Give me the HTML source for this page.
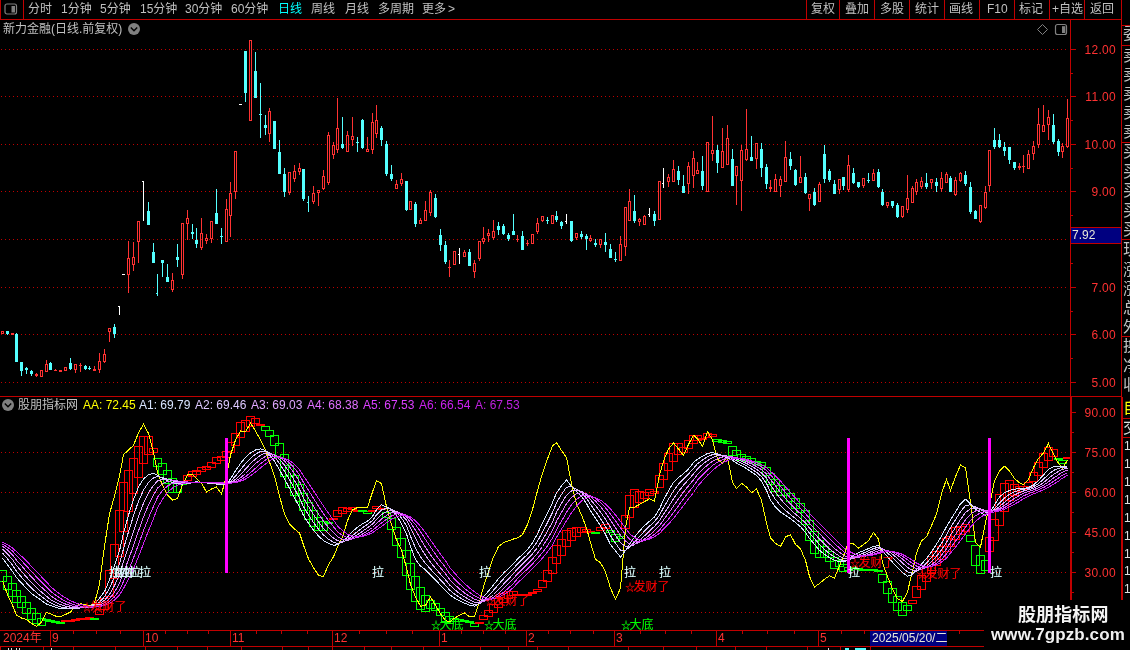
<!DOCTYPE html><html><head><meta charset="utf-8"><title>chart</title><style>
html,body{margin:0;padding:0;background:#000;}
.a,.t,.pl,.lab,.mo,.rp{will-change:transform;}
body{width:1130px;height:650px;position:relative;overflow:hidden;font-family:"Liberation Sans","Noto Sans CJK SC",sans-serif;font-size:12px;color:#c0c0c0;}
.a{position:absolute;white-space:nowrap;line-height:14px;}
.hl{position:absolute;height:1px;background:#c00000;}
.vl{position:absolute;width:1px;background:#c00000;}
.t{position:absolute;white-space:nowrap;top:2px;line-height:15px;font-size:12px;color:#c0c0c0;}
.pl{position:absolute;left:1076px;width:40px;text-align:right;color:#ff3232;line-height:14px;font-size:12px;letter-spacing:0.3px;}
.lab{position:absolute;white-space:nowrap;font-size:12px;line-height:12px;-webkit-text-stroke:0.12px;}
.mo{position:absolute;top:631px;color:#ff3232;line-height:14px;font-size:12px;}
.rp{position:absolute;left:1123px;width:7px;overflow:hidden;white-space:nowrap;font-size:16px;line-height:16px;color:#c0c0c0;}
</style></head><body>
<svg width="1130" height="650" viewBox="0 0 1130 650" style="position:absolute;left:0;top:0" shape-rendering="crispEdges">
<line x1="1" y1="49.5" x2="1067" y2="49.5" stroke="#c00000" stroke-width="1" stroke-dasharray="1 3"/>
<line x1="1" y1="96.5" x2="1067" y2="96.5" stroke="#c00000" stroke-width="1" stroke-dasharray="1 3"/>
<line x1="1" y1="144.5" x2="1067" y2="144.5" stroke="#c00000" stroke-width="1" stroke-dasharray="1 3"/>
<line x1="1" y1="191.5" x2="1067" y2="191.5" stroke="#c00000" stroke-width="1" stroke-dasharray="1 3"/>
<line x1="1" y1="239.5" x2="1067" y2="239.5" stroke="#c00000" stroke-width="1" stroke-dasharray="1 3"/>
<line x1="1" y1="287.5" x2="1067" y2="287.5" stroke="#c00000" stroke-width="1" stroke-dasharray="1 3"/>
<line x1="1" y1="334.5" x2="1067" y2="334.5" stroke="#c00000" stroke-width="1" stroke-dasharray="1 3"/>
<line x1="1" y1="382.5" x2="1067" y2="382.5" stroke="#c00000" stroke-width="1" stroke-dasharray="1 3"/>
<line x1="1" y1="452.5" x2="1067" y2="452.5" stroke="#c00000" stroke-width="1" stroke-dasharray="1 3"/>
<line x1="1" y1="492.5" x2="1067" y2="492.5" stroke="#c00000" stroke-width="1" stroke-dasharray="1 3"/>
<line x1="1" y1="532.5" x2="1067" y2="532.5" stroke="#c00000" stroke-width="1" stroke-dasharray="1 3"/>
<line x1="1" y1="572.5" x2="1067" y2="572.5" stroke="#c00000" stroke-width="1" stroke-dasharray="1 3"/>
<line x1="1" y1="612.5" x2="1067" y2="612.5" stroke="#c00000" stroke-width="1" stroke-dasharray="1 3"/>
<g><rect x="1.5" y="331.5" width="2" height="2" fill="none" stroke="#ff3232" stroke-width="1"/><rect x="7" y="331" width="1" height="4" fill="#54ffff"/><rect x="6" y="331" width="3" height="3" fill="#54ffff"/><rect x="11" y="333" width="3" height="2" fill="#ff3232"/><rect x="16" y="333" width="1" height="29" fill="#54ffff"/><rect x="15" y="334" width="3" height="28" fill="#54ffff"/><rect x="21" y="362" width="1" height="14" fill="#54ffff"/><rect x="20" y="362" width="3" height="9" fill="#54ffff"/><rect x="26" y="367" width="1" height="7" fill="#54ffff"/><rect x="25" y="368" width="3" height="2" fill="#54ffff"/><rect x="31" y="370" width="1" height="6" fill="#54ffff"/><rect x="30" y="371" width="3" height="3" fill="#54ffff"/><rect x="36" y="373" width="1" height="1" fill="#ff3232"/><rect x="36" y="376" width="1" height="1" fill="#ff3232"/><rect x="35" y="374" width="3" height="2" fill="#ff3232"/><rect x="40.5" y="370.5" width="2" height="6" fill="none" stroke="#ff3232" stroke-width="1"/><rect x="46" y="360" width="1" height="4" fill="#ff3232"/><rect x="45.5" y="364.5" width="2" height="7" fill="none" stroke="#ff3232" stroke-width="1"/><rect x="50" y="362" width="1" height="8" fill="#54ffff"/><rect x="49" y="363" width="3" height="7" fill="#54ffff"/><rect x="55" y="369" width="1" height="1" fill="#ff3232"/><rect x="54" y="370" width="3" height="1" fill="#ff3232"/><rect x="59" y="370" width="3" height="2" fill="#ff3232"/><rect x="64.5" y="367.5" width="2" height="3" fill="none" stroke="#ff3232" stroke-width="1"/><rect x="70" y="358" width="1" height="12" fill="#54ffff"/><rect x="69" y="363" width="3" height="6" fill="#54ffff"/><rect x="75" y="370" width="1" height="3" fill="#ff3232"/><rect x="74.5" y="364.5" width="2" height="5" fill="none" stroke="#ff3232" stroke-width="1"/><rect x="80" y="363" width="1" height="2" fill="#ff3232"/><rect x="80" y="366" width="1" height="6" fill="#ff3232"/><rect x="79" y="365" width="3" height="1" fill="#ff3232"/><rect x="85" y="365" width="1" height="5" fill="#54ffff"/><rect x="84" y="366" width="3" height="3" fill="#54ffff"/><rect x="89" y="366" width="1" height="4" fill="#54ffff"/><rect x="88" y="368" width="3" height="1" fill="#54ffff"/><rect x="94" y="366" width="1" height="3" fill="#ff3232"/><rect x="93" y="369" width="3" height="2" fill="#ff3232"/><rect x="99" y="353" width="1" height="8" fill="#ff3232"/><rect x="99" y="370" width="1" height="3" fill="#ff3232"/><rect x="98.5" y="361.5" width="2" height="8" fill="none" stroke="#ff3232" stroke-width="1"/><rect x="104" y="349" width="1" height="5" fill="#ff3232"/><rect x="104" y="362" width="1" height="1" fill="#ff3232"/><rect x="103.5" y="354.5" width="2" height="7" fill="none" stroke="#ff3232" stroke-width="1"/><rect x="109" y="332" width="1" height="10" fill="#ff3232"/><rect x="108.5" y="328.5" width="2" height="3" fill="none" stroke="#ff3232" stroke-width="1"/><rect x="114" y="324" width="1" height="14" fill="#54ffff"/><rect x="113" y="327" width="3" height="7" fill="#54ffff"/><rect x="119" y="306" width="1" height="9" fill="#ffffff"/><rect x="118" y="306" width="2" height="1" fill="#ffffff"/><rect x="122" y="274" width="3" height="1" fill="#ffffff"/><rect x="128" y="241" width="1" height="17" fill="#ff3232"/><rect x="128" y="275" width="1" height="18" fill="#ff3232"/><rect x="127.5" y="258.5" width="2" height="16" fill="none" stroke="#ff3232" stroke-width="1"/><rect x="133" y="242" width="1" height="15" fill="#ff3232"/><rect x="133" y="265" width="1" height="6" fill="#ff3232"/><rect x="132.5" y="257.5" width="2" height="7" fill="none" stroke="#ff3232" stroke-width="1"/><rect x="138" y="242" width="1" height="21" fill="#ff3232"/><rect x="137.5" y="221.5" width="2" height="20" fill="none" stroke="#ff3232" stroke-width="1"/><rect x="143" y="181" width="1" height="40" fill="#ffffff"/><rect x="142" y="181" width="2" height="1" fill="#ffffff"/><rect x="148" y="202" width="1" height="23" fill="#54ffff"/><rect x="147" y="211" width="3" height="14" fill="#54ffff"/><rect x="153" y="243" width="1" height="20" fill="#54ffff"/><rect x="152" y="252" width="3" height="11" fill="#54ffff"/><rect x="157" y="274" width="1" height="22" fill="#54ffff"/><rect x="156" y="293" width="2" height="1" fill="#54ffff"/><rect x="162" y="260" width="1" height="17" fill="#54ffff"/><rect x="161" y="260" width="3" height="3" fill="#54ffff"/><rect x="167" y="264" width="1" height="18" fill="#54ffff"/><rect x="166" y="277" width="3" height="5" fill="#54ffff"/><rect x="172" y="273" width="1" height="7" fill="#ff3232"/><rect x="172" y="290" width="1" height="2" fill="#ff3232"/><rect x="171.5" y="280.5" width="2" height="9" fill="none" stroke="#ff3232" stroke-width="1"/><rect x="177" y="244" width="1" height="23" fill="#54ffff"/><rect x="176" y="257" width="3" height="3" fill="#54ffff"/><rect x="182" y="275" width="1" height="4" fill="#ff3232"/><rect x="181.5" y="223.5" width="2" height="51" fill="none" stroke="#ff3232" stroke-width="1"/><rect x="187" y="210" width="1" height="8" fill="#ff3232"/><rect x="187" y="224" width="1" height="16" fill="#ff3232"/><rect x="186.5" y="218.5" width="2" height="5" fill="none" stroke="#ff3232" stroke-width="1"/><rect x="192" y="224" width="1" height="15" fill="#54ffff"/><rect x="191" y="232" width="3" height="2" fill="#54ffff"/><rect x="196" y="228" width="1" height="20" fill="#54ffff"/><rect x="195" y="240" width="3" height="4" fill="#54ffff"/><rect x="201" y="218" width="1" height="15" fill="#ff3232"/><rect x="201" y="248" width="1" height="2" fill="#ff3232"/><rect x="200.5" y="233.5" width="2" height="14" fill="none" stroke="#ff3232" stroke-width="1"/><rect x="206" y="234" width="1" height="4" fill="#ff3232"/><rect x="206" y="241" width="1" height="3" fill="#ff3232"/><rect x="205.5" y="238.5" width="2" height="2" fill="none" stroke="#ff3232" stroke-width="1"/><rect x="211" y="239" width="1" height="4" fill="#ff3232"/><rect x="210.5" y="221.5" width="2" height="17" fill="none" stroke="#ff3232" stroke-width="1"/><rect x="216" y="189" width="1" height="35" fill="#54ffff"/><rect x="215" y="213" width="3" height="11" fill="#54ffff"/><rect x="221" y="228" width="1" height="16" fill="#54ffff"/><rect x="220" y="236" width="3" height="1" fill="#54ffff"/><rect x="226" y="199" width="1" height="10" fill="#ff3232"/><rect x="225.5" y="209.5" width="2" height="32" fill="none" stroke="#ff3232" stroke-width="1"/><rect x="230" y="182" width="1" height="11" fill="#ff3232"/><rect x="230" y="216" width="1" height="21" fill="#ff3232"/><rect x="229.5" y="193.5" width="2" height="22" fill="none" stroke="#ff3232" stroke-width="1"/><rect x="235" y="192" width="1" height="7" fill="#ff3232"/><rect x="234.5" y="151.5" width="2" height="40" fill="none" stroke="#ff3232" stroke-width="1"/><rect x="239" y="104" width="3" height="1" fill="#ffffff"/><rect x="245" y="51" width="1" height="51" fill="#54ffff"/><rect x="244" y="51" width="3" height="42" fill="#54ffff"/><rect x="249.5" y="40.5" width="2" height="80" fill="none" stroke="#ff3232" stroke-width="1"/><rect x="255" y="52" width="1" height="46" fill="#54ffff"/><rect x="254" y="71" width="3" height="27" fill="#54ffff"/><rect x="260" y="83" width="1" height="55" fill="#54ffff"/><rect x="259" y="114" width="3" height="1" fill="#54ffff"/><rect x="265" y="115" width="1" height="20" fill="#54ffff"/><rect x="264" y="125" width="3" height="3" fill="#54ffff"/><rect x="269" y="108" width="1" height="3" fill="#ff3232"/><rect x="269" y="134" width="1" height="8" fill="#ff3232"/><rect x="268.5" y="111.5" width="2" height="22" fill="none" stroke="#ff3232" stroke-width="1"/><rect x="274" y="121" width="1" height="28" fill="#54ffff"/><rect x="273" y="121" width="3" height="28" fill="#54ffff"/><rect x="279" y="140" width="1" height="34" fill="#54ffff"/><rect x="278" y="152" width="3" height="22" fill="#54ffff"/><rect x="284" y="168" width="1" height="29" fill="#54ffff"/><rect x="283" y="174" width="3" height="18" fill="#54ffff"/><rect x="289" y="193" width="1" height="2" fill="#ff3232"/><rect x="288.5" y="172.5" width="2" height="20" fill="none" stroke="#ff3232" stroke-width="1"/><rect x="294" y="165" width="1" height="6" fill="#ff3232"/><rect x="294" y="179" width="1" height="3" fill="#ff3232"/><rect x="293.5" y="171.5" width="2" height="7" fill="none" stroke="#ff3232" stroke-width="1"/><rect x="299" y="163" width="1" height="5" fill="#ff3232"/><rect x="299" y="172" width="1" height="3" fill="#ff3232"/><rect x="298.5" y="168.5" width="2" height="3" fill="none" stroke="#ff3232" stroke-width="1"/><rect x="303" y="169" width="1" height="32" fill="#54ffff"/><rect x="302" y="169" width="3" height="30" fill="#54ffff"/><rect x="308" y="196" width="1" height="16" fill="#54ffff"/><rect x="307" y="202" width="2" height="1" fill="#54ffff"/><rect x="313" y="186" width="1" height="7" fill="#ff3232"/><rect x="313" y="202" width="1" height="2" fill="#ff3232"/><rect x="312.5" y="193.5" width="2" height="8" fill="none" stroke="#ff3232" stroke-width="1"/><rect x="318" y="193" width="1" height="13" fill="#ff3232"/><rect x="317.5" y="190.5" width="2" height="2" fill="none" stroke="#ff3232" stroke-width="1"/><rect x="323" y="170" width="1" height="6" fill="#ff3232"/><rect x="323" y="189" width="1" height="1" fill="#ff3232"/><rect x="322.5" y="176.5" width="2" height="12" fill="none" stroke="#ff3232" stroke-width="1"/><rect x="328" y="132" width="1" height="3" fill="#ff3232"/><rect x="328" y="183" width="1" height="2" fill="#ff3232"/><rect x="327.5" y="135.5" width="2" height="47" fill="none" stroke="#ff3232" stroke-width="1"/><rect x="333" y="142" width="1" height="3" fill="#ff3232"/><rect x="333" y="155" width="1" height="4" fill="#ff3232"/><rect x="332.5" y="145.5" width="2" height="9" fill="none" stroke="#ff3232" stroke-width="1"/><rect x="337" y="98" width="1" height="30" fill="#ff3232"/><rect x="337" y="150" width="1" height="3" fill="#ff3232"/><rect x="336.5" y="128.5" width="2" height="21" fill="none" stroke="#ff3232" stroke-width="1"/><rect x="342" y="117" width="1" height="32" fill="#54ffff"/><rect x="341" y="144" width="3" height="4" fill="#54ffff"/><rect x="347" y="131" width="1" height="4" fill="#ff3232"/><rect x="346.5" y="135.5" width="2" height="16" fill="none" stroke="#ff3232" stroke-width="1"/><rect x="352" y="117" width="1" height="19" fill="#ff3232"/><rect x="352" y="140" width="1" height="6" fill="#ff3232"/><rect x="351.5" y="136.5" width="2" height="3" fill="none" stroke="#ff3232" stroke-width="1"/><rect x="357" y="137" width="1" height="15" fill="#54ffff"/><rect x="356" y="142" width="3" height="1" fill="#54ffff"/><rect x="362" y="119" width="1" height="30" fill="#54ffff"/><rect x="361" y="120" width="3" height="28" fill="#54ffff"/><rect x="367" y="137" width="1" height="12" fill="#ff3232"/><rect x="366.5" y="149.5" width="2" height="2" fill="none" stroke="#ff3232" stroke-width="1"/><rect x="372" y="113" width="1" height="9" fill="#ff3232"/><rect x="372" y="150" width="1" height="4" fill="#ff3232"/><rect x="371.5" y="122.5" width="2" height="27" fill="none" stroke="#ff3232" stroke-width="1"/><rect x="376" y="105" width="1" height="15" fill="#ff3232"/><rect x="376" y="134" width="1" height="4" fill="#ff3232"/><rect x="375.5" y="120.5" width="2" height="13" fill="none" stroke="#ff3232" stroke-width="1"/><rect x="381" y="126" width="1" height="20" fill="#54ffff"/><rect x="380" y="128" width="3" height="12" fill="#54ffff"/><rect x="386" y="141" width="1" height="35" fill="#54ffff"/><rect x="385" y="144" width="3" height="30" fill="#54ffff"/><rect x="391" y="165" width="1" height="16" fill="#54ffff"/><rect x="390" y="174" width="3" height="5" fill="#54ffff"/><rect x="396" y="180" width="1" height="4" fill="#ff3232"/><rect x="395.5" y="184.5" width="2" height="4" fill="none" stroke="#ff3232" stroke-width="1"/><rect x="401" y="173" width="1" height="6" fill="#ff3232"/><rect x="401" y="184" width="1" height="2" fill="#ff3232"/><rect x="400.5" y="179.5" width="2" height="4" fill="none" stroke="#ff3232" stroke-width="1"/><rect x="406" y="181" width="1" height="30" fill="#54ffff"/><rect x="405" y="181" width="3" height="29" fill="#54ffff"/><rect x="409.5" y="201.5" width="2" height="8" fill="none" stroke="#ff3232" stroke-width="1"/><rect x="415" y="202" width="1" height="25" fill="#54ffff"/><rect x="414" y="204" width="3" height="20" fill="#54ffff"/><rect x="420" y="218" width="1" height="2" fill="#ff3232"/><rect x="419.5" y="220.5" width="2" height="3" fill="none" stroke="#ff3232" stroke-width="1"/><rect x="425" y="201" width="1" height="9" fill="#ff3232"/><rect x="424.5" y="210.5" width="2" height="10" fill="none" stroke="#ff3232" stroke-width="1"/><rect x="430" y="190" width="1" height="2" fill="#ff3232"/><rect x="430" y="213" width="1" height="3" fill="#ff3232"/><rect x="429.5" y="192.5" width="2" height="20" fill="none" stroke="#ff3232" stroke-width="1"/><rect x="435" y="194" width="1" height="24" fill="#54ffff"/><rect x="434" y="198" width="3" height="19" fill="#54ffff"/><rect x="440" y="229" width="1" height="22" fill="#54ffff"/><rect x="439" y="235" width="3" height="10" fill="#54ffff"/><rect x="445" y="241" width="1" height="23" fill="#54ffff"/><rect x="444" y="245" width="3" height="17" fill="#54ffff"/><rect x="449" y="260" width="1" height="7" fill="#ff3232"/><rect x="449" y="268" width="1" height="9" fill="#ff3232"/><rect x="448" y="267" width="3" height="1" fill="#ff3232"/><rect x="453.5" y="251.5" width="2" height="13" fill="none" stroke="#ff3232" stroke-width="1"/><rect x="459" y="248" width="1" height="16" fill="#ffffff"/><rect x="458" y="254" width="2" height="1" fill="#ffffff"/><rect x="464" y="250" width="1" height="2" fill="#ff3232"/><rect x="463.5" y="252.5" width="2" height="4" fill="none" stroke="#ff3232" stroke-width="1"/><rect x="469" y="249" width="1" height="17" fill="#54ffff"/><rect x="468" y="252" width="3" height="14" fill="#54ffff"/><rect x="474" y="260" width="1" height="3" fill="#ff3232"/><rect x="474" y="272" width="1" height="6" fill="#ff3232"/><rect x="473.5" y="263.5" width="2" height="8" fill="none" stroke="#ff3232" stroke-width="1"/><rect x="479" y="259" width="1" height="2" fill="#ff3232"/><rect x="478.5" y="241.5" width="2" height="17" fill="none" stroke="#ff3232" stroke-width="1"/><rect x="483" y="227" width="1" height="11" fill="#ff3232"/><rect x="483" y="242" width="1" height="2" fill="#ff3232"/><rect x="482.5" y="238.5" width="2" height="3" fill="none" stroke="#ff3232" stroke-width="1"/><rect x="488" y="229" width="1" height="4" fill="#ff3232"/><rect x="488" y="236" width="1" height="6" fill="#ff3232"/><rect x="487.5" y="233.5" width="2" height="2" fill="none" stroke="#ff3232" stroke-width="1"/><rect x="493" y="220" width="1" height="11" fill="#ff3232"/><rect x="493" y="238" width="1" height="2" fill="#ff3232"/><rect x="492.5" y="231.5" width="2" height="6" fill="none" stroke="#ff3232" stroke-width="1"/><rect x="498" y="222" width="1" height="13" fill="#54ffff"/><rect x="497" y="226" width="3" height="4" fill="#54ffff"/><rect x="503" y="224" width="1" height="11" fill="#54ffff"/><rect x="502" y="226" width="3" height="8" fill="#54ffff"/><rect x="508" y="233" width="1" height="8" fill="#54ffff"/><rect x="507" y="235" width="3" height="4" fill="#54ffff"/><rect x="513" y="214" width="1" height="21" fill="#54ffff"/><rect x="512" y="231" width="3" height="4" fill="#54ffff"/><rect x="517" y="235" width="1" height="4" fill="#ff3232"/><rect x="517" y="240" width="1" height="2" fill="#ff3232"/><rect x="516" y="239" width="3" height="1" fill="#ff3232"/><rect x="522" y="231" width="1" height="19" fill="#54ffff"/><rect x="521" y="236" width="3" height="14" fill="#54ffff"/><rect x="527" y="240" width="1" height="3" fill="#ff3232"/><rect x="527" y="244" width="1" height="2" fill="#ff3232"/><rect x="526" y="243" width="3" height="1" fill="#ff3232"/><rect x="531.5" y="234.5" width="2" height="9" fill="none" stroke="#ff3232" stroke-width="1"/><rect x="537" y="218" width="1" height="5" fill="#ff3232"/><rect x="537" y="232" width="1" height="2" fill="#ff3232"/><rect x="536.5" y="223.5" width="2" height="8" fill="none" stroke="#ff3232" stroke-width="1"/><rect x="542" y="221" width="1" height="1" fill="#ff3232"/><rect x="541.5" y="216.5" width="2" height="4" fill="none" stroke="#ff3232" stroke-width="1"/><rect x="547" y="217" width="1" height="7" fill="#54ffff"/><rect x="546" y="220" width="3" height="1" fill="#54ffff"/><rect x="551.5" y="215.5" width="2" height="8" fill="none" stroke="#ff3232" stroke-width="1"/><rect x="556" y="211" width="1" height="11" fill="#54ffff"/><rect x="555" y="216" width="3" height="4" fill="#54ffff"/><rect x="561" y="221" width="1" height="8" fill="#54ffff"/><rect x="560" y="222" width="3" height="4" fill="#54ffff"/><rect x="566" y="214" width="1" height="10" fill="#ffffff"/><rect x="565" y="221" width="2" height="1" fill="#ffffff"/><rect x="571" y="221" width="1" height="21" fill="#54ffff"/><rect x="570" y="221" width="3" height="20" fill="#54ffff"/><rect x="576" y="238" width="1" height="2" fill="#ff3232"/><rect x="575.5" y="233.5" width="2" height="4" fill="none" stroke="#ff3232" stroke-width="1"/><rect x="581" y="231" width="1" height="8" fill="#54ffff"/><rect x="580" y="234" width="3" height="3" fill="#54ffff"/><rect x="586" y="234" width="1" height="16" fill="#54ffff"/><rect x="585" y="236" width="3" height="3" fill="#54ffff"/><rect x="590" y="235" width="1" height="3" fill="#ff3232"/><rect x="590" y="241" width="1" height="1" fill="#ff3232"/><rect x="589.5" y="238.5" width="2" height="2" fill="none" stroke="#ff3232" stroke-width="1"/><rect x="595" y="239" width="1" height="8" fill="#54ffff"/><rect x="594" y="243" width="3" height="2" fill="#54ffff"/><rect x="600" y="245" width="1" height="3" fill="#ff3232"/><rect x="599.5" y="239.5" width="2" height="5" fill="none" stroke="#ff3232" stroke-width="1"/><rect x="605" y="233" width="1" height="19" fill="#54ffff"/><rect x="604" y="242" width="3" height="3" fill="#54ffff"/><rect x="610" y="244" width="1" height="14" fill="#54ffff"/><rect x="609" y="249" width="3" height="9" fill="#54ffff"/><rect x="615" y="252" width="1" height="10" fill="#54ffff"/><rect x="614" y="259" width="3" height="1" fill="#54ffff"/><rect x="620" y="236" width="1" height="8" fill="#ff3232"/><rect x="619.5" y="244.5" width="2" height="16" fill="none" stroke="#ff3232" stroke-width="1"/><rect x="625" y="247" width="1" height="9" fill="#ff3232"/><rect x="624.5" y="207.5" width="2" height="39" fill="none" stroke="#ff3232" stroke-width="1"/><rect x="629" y="189" width="1" height="12" fill="#ff3232"/><rect x="628.5" y="201.5" width="2" height="19" fill="none" stroke="#ff3232" stroke-width="1"/><rect x="634" y="195" width="1" height="28" fill="#54ffff"/><rect x="633" y="211" width="3" height="10" fill="#54ffff"/><rect x="639" y="218" width="1" height="1" fill="#ff3232"/><rect x="639" y="222" width="1" height="4" fill="#ff3232"/><rect x="638.5" y="219.5" width="2" height="2" fill="none" stroke="#ff3232" stroke-width="1"/><rect x="644" y="215" width="1" height="1" fill="#ff3232"/><rect x="643.5" y="216.5" width="2" height="8" fill="none" stroke="#ff3232" stroke-width="1"/><rect x="649" y="208" width="1" height="9" fill="#ffffff"/><rect x="648" y="214" width="2" height="1" fill="#ffffff"/><rect x="654" y="211" width="1" height="15" fill="#54ffff"/><rect x="653" y="214" width="3" height="7" fill="#54ffff"/><rect x="658.5" y="181.5" width="2" height="38" fill="none" stroke="#ff3232" stroke-width="1"/><rect x="663" y="168" width="1" height="20" fill="#ffffff"/><rect x="662" y="183" width="2" height="1" fill="#ffffff"/><rect x="668" y="174" width="1" height="3" fill="#ff3232"/><rect x="668" y="182" width="1" height="5" fill="#ff3232"/><rect x="667.5" y="177.5" width="2" height="4" fill="none" stroke="#ff3232" stroke-width="1"/><rect x="673" y="160" width="1" height="9" fill="#ff3232"/><rect x="672.5" y="169.5" width="2" height="12" fill="none" stroke="#ff3232" stroke-width="1"/><rect x="678" y="166" width="1" height="19" fill="#54ffff"/><rect x="677" y="171" width="3" height="9" fill="#54ffff"/><rect x="683" y="175" width="1" height="18" fill="#54ffff"/><rect x="682" y="186" width="3" height="7" fill="#54ffff"/><rect x="688" y="162" width="1" height="4" fill="#ff3232"/><rect x="688" y="184" width="1" height="10" fill="#ff3232"/><rect x="687.5" y="166.5" width="2" height="17" fill="none" stroke="#ff3232" stroke-width="1"/><rect x="693" y="151" width="1" height="7" fill="#ff3232"/><rect x="693" y="176" width="1" height="12" fill="#ff3232"/><rect x="692.5" y="158.5" width="2" height="17" fill="none" stroke="#ff3232" stroke-width="1"/><rect x="697" y="162" width="1" height="8" fill="#ff3232"/><rect x="696.5" y="170.5" width="2" height="3" fill="none" stroke="#ff3232" stroke-width="1"/><rect x="702" y="156" width="1" height="34" fill="#54ffff"/><rect x="701" y="171" width="3" height="15" fill="#54ffff"/><rect x="706.5" y="142.5" width="2" height="49" fill="none" stroke="#ff3232" stroke-width="1"/><rect x="712" y="116" width="1" height="34" fill="#ff3232"/><rect x="712" y="154" width="1" height="7" fill="#ff3232"/><rect x="711.5" y="150.5" width="2" height="3" fill="none" stroke="#ff3232" stroke-width="1"/><rect x="717" y="145" width="1" height="28" fill="#54ffff"/><rect x="716" y="150" width="3" height="13" fill="#54ffff"/><rect x="722" y="128" width="1" height="23" fill="#ff3232"/><rect x="721.5" y="151.5" width="2" height="16" fill="none" stroke="#ff3232" stroke-width="1"/><rect x="727" y="125" width="1" height="13" fill="#ff3232"/><rect x="726.5" y="138.5" width="2" height="26" fill="none" stroke="#ff3232" stroke-width="1"/><rect x="732" y="149" width="1" height="37" fill="#54ffff"/><rect x="731" y="159" width="3" height="27" fill="#54ffff"/><rect x="736" y="176" width="1" height="29" fill="#ff3232"/><rect x="735.5" y="166.5" width="2" height="9" fill="none" stroke="#ff3232" stroke-width="1"/><rect x="741" y="145" width="1" height="5" fill="#ff3232"/><rect x="741" y="181" width="1" height="30" fill="#ff3232"/><rect x="740.5" y="150.5" width="2" height="30" fill="none" stroke="#ff3232" stroke-width="1"/><rect x="746" y="109" width="1" height="40" fill="#ff3232"/><rect x="746" y="160" width="1" height="1" fill="#ff3232"/><rect x="745.5" y="149.5" width="2" height="10" fill="none" stroke="#ff3232" stroke-width="1"/><rect x="751" y="136" width="1" height="25" fill="#54ffff"/><rect x="750" y="157" width="3" height="4" fill="#54ffff"/><rect x="756" y="159" width="1" height="10" fill="#ff3232"/><rect x="755.5" y="143.5" width="2" height="15" fill="none" stroke="#ff3232" stroke-width="1"/><rect x="761" y="143" width="1" height="34" fill="#54ffff"/><rect x="760" y="149" width="3" height="19" fill="#54ffff"/><rect x="766" y="164" width="1" height="25" fill="#54ffff"/><rect x="765" y="167" width="3" height="17" fill="#54ffff"/><rect x="770" y="180" width="1" height="7" fill="#ff3232"/><rect x="770" y="189" width="1" height="3" fill="#ff3232"/><rect x="769" y="187" width="3" height="2" fill="#ff3232"/><rect x="775" y="174" width="1" height="5" fill="#ff3232"/><rect x="774.5" y="179.5" width="2" height="12" fill="none" stroke="#ff3232" stroke-width="1"/><rect x="780" y="176" width="1" height="3" fill="#ff3232"/><rect x="780" y="186" width="1" height="11" fill="#ff3232"/><rect x="779.5" y="179.5" width="2" height="6" fill="none" stroke="#ff3232" stroke-width="1"/><rect x="785" y="141" width="1" height="16" fill="#ff3232"/><rect x="784.5" y="157.5" width="2" height="24" fill="none" stroke="#ff3232" stroke-width="1"/><rect x="790" y="152" width="1" height="18" fill="#54ffff"/><rect x="789" y="159" width="3" height="7" fill="#54ffff"/><rect x="795" y="169" width="1" height="17" fill="#54ffff"/><rect x="794" y="170" width="3" height="15" fill="#54ffff"/><rect x="800" y="156" width="1" height="21" fill="#ff3232"/><rect x="799.5" y="177.5" width="2" height="5" fill="none" stroke="#ff3232" stroke-width="1"/><rect x="805" y="173" width="1" height="21" fill="#54ffff"/><rect x="804" y="177" width="3" height="16" fill="#54ffff"/><rect x="809" y="199" width="1" height="12" fill="#ff3232"/><rect x="808.5" y="194.5" width="2" height="4" fill="none" stroke="#ff3232" stroke-width="1"/><rect x="814" y="188" width="1" height="18" fill="#54ffff"/><rect x="813" y="192" width="3" height="13" fill="#54ffff"/><rect x="819" y="182" width="1" height="2" fill="#ff3232"/><rect x="818.5" y="184.5" width="2" height="17" fill="none" stroke="#ff3232" stroke-width="1"/><rect x="824" y="145" width="1" height="38" fill="#54ffff"/><rect x="823" y="154" width="3" height="25" fill="#54ffff"/><rect x="829" y="169" width="1" height="13" fill="#54ffff"/><rect x="828" y="171" width="3" height="9" fill="#54ffff"/><rect x="834" y="180" width="1" height="14" fill="#54ffff"/><rect x="833" y="184" width="3" height="10" fill="#54ffff"/><rect x="839" y="190" width="1" height="4" fill="#ff3232"/><rect x="838.5" y="179.5" width="2" height="10" fill="none" stroke="#ff3232" stroke-width="1"/><rect x="843" y="177" width="1" height="13" fill="#54ffff"/><rect x="842" y="177" width="3" height="9" fill="#54ffff"/><rect x="848" y="155" width="1" height="10" fill="#ff3232"/><rect x="848" y="190" width="1" height="2" fill="#ff3232"/><rect x="847.5" y="165.5" width="2" height="24" fill="none" stroke="#ff3232" stroke-width="1"/><rect x="853" y="168" width="1" height="16" fill="#54ffff"/><rect x="852" y="173" width="3" height="10" fill="#54ffff"/><rect x="858" y="182" width="1" height="6" fill="#54ffff"/><rect x="857" y="182" width="3" height="5" fill="#54ffff"/><rect x="863" y="186" width="1" height="2" fill="#ff3232"/><rect x="862.5" y="178.5" width="2" height="7" fill="none" stroke="#ff3232" stroke-width="1"/><rect x="868" y="173" width="1" height="10" fill="#54ffff"/><rect x="867" y="180" width="3" height="1" fill="#54ffff"/><rect x="873" y="169" width="1" height="4" fill="#ff3232"/><rect x="872.5" y="173.5" width="2" height="7" fill="none" stroke="#ff3232" stroke-width="1"/><rect x="878" y="169" width="1" height="19" fill="#54ffff"/><rect x="877" y="172" width="3" height="15" fill="#54ffff"/><rect x="882" y="189" width="1" height="17" fill="#54ffff"/><rect x="881" y="192" width="3" height="13" fill="#54ffff"/><rect x="887" y="206" width="1" height="2" fill="#ff3232"/><rect x="886.5" y="202.5" width="2" height="3" fill="none" stroke="#ff3232" stroke-width="1"/><rect x="892" y="201" width="1" height="7" fill="#54ffff"/><rect x="891" y="201" width="3" height="5" fill="#54ffff"/><rect x="897" y="203" width="1" height="15" fill="#54ffff"/><rect x="896" y="205" width="3" height="12" fill="#54ffff"/><rect x="902" y="217" width="1" height="1" fill="#ff3232"/><rect x="901.5" y="206.5" width="2" height="10" fill="none" stroke="#ff3232" stroke-width="1"/><rect x="907" y="175" width="1" height="23" fill="#ff3232"/><rect x="907" y="210" width="1" height="3" fill="#ff3232"/><rect x="906.5" y="198.5" width="2" height="11" fill="none" stroke="#ff3232" stroke-width="1"/><rect x="912" y="186" width="1" height="2" fill="#ff3232"/><rect x="911.5" y="188.5" width="2" height="14" fill="none" stroke="#ff3232" stroke-width="1"/><rect x="916" y="179" width="1" height="3" fill="#ff3232"/><rect x="916" y="192" width="1" height="3" fill="#ff3232"/><rect x="915.5" y="182.5" width="2" height="9" fill="none" stroke="#ff3232" stroke-width="1"/><rect x="921" y="177" width="1" height="4" fill="#ff3232"/><rect x="921" y="187" width="1" height="2" fill="#ff3232"/><rect x="920.5" y="181.5" width="2" height="5" fill="none" stroke="#ff3232" stroke-width="1"/><rect x="926" y="173" width="1" height="16" fill="#54ffff"/><rect x="925" y="183" width="3" height="4" fill="#54ffff"/><rect x="931" y="183" width="1" height="6" fill="#ff3232"/><rect x="930.5" y="179.5" width="2" height="3" fill="none" stroke="#ff3232" stroke-width="1"/><rect x="936" y="178" width="1" height="14" fill="#54ffff"/><rect x="935" y="182" width="3" height="4" fill="#54ffff"/><rect x="941" y="172" width="1" height="6" fill="#ff3232"/><rect x="941" y="189" width="1" height="3" fill="#ff3232"/><rect x="940.5" y="178.5" width="2" height="10" fill="none" stroke="#ff3232" stroke-width="1"/><rect x="946" y="172" width="1" height="2" fill="#ff3232"/><rect x="945.5" y="174.5" width="2" height="8" fill="none" stroke="#ff3232" stroke-width="1"/><rect x="950" y="176" width="1" height="16" fill="#54ffff"/><rect x="949" y="178" width="3" height="14" fill="#54ffff"/><rect x="955" y="177" width="1" height="3" fill="#ff3232"/><rect x="955" y="195" width="1" height="1" fill="#ff3232"/><rect x="954.5" y="180.5" width="2" height="14" fill="none" stroke="#ff3232" stroke-width="1"/><rect x="960" y="172" width="1" height="1" fill="#ff3232"/><rect x="960" y="181" width="1" height="1" fill="#ff3232"/><rect x="959.5" y="173.5" width="2" height="7" fill="none" stroke="#ff3232" stroke-width="1"/><rect x="965" y="171" width="1" height="15" fill="#54ffff"/><rect x="964" y="175" width="3" height="9" fill="#54ffff"/><rect x="970" y="182" width="1" height="32" fill="#54ffff"/><rect x="969" y="187" width="3" height="25" fill="#54ffff"/><rect x="975" y="210" width="1" height="9" fill="#54ffff"/><rect x="974" y="211" width="3" height="8" fill="#54ffff"/><rect x="980" y="222" width="1" height="1" fill="#ff3232"/><rect x="979.5" y="205.5" width="2" height="16" fill="none" stroke="#ff3232" stroke-width="1"/><rect x="985" y="186" width="1" height="6" fill="#ff3232"/><rect x="985" y="208" width="1" height="1" fill="#ff3232"/><rect x="984.5" y="192.5" width="2" height="15" fill="none" stroke="#ff3232" stroke-width="1"/><rect x="989" y="186" width="1" height="6" fill="#ff3232"/><rect x="988.5" y="150.5" width="2" height="35" fill="none" stroke="#ff3232" stroke-width="1"/><rect x="994" y="128" width="1" height="21" fill="#54ffff"/><rect x="993" y="140" width="3" height="7" fill="#54ffff"/><rect x="999" y="134" width="1" height="14" fill="#54ffff"/><rect x="998" y="140" width="3" height="7" fill="#54ffff"/><rect x="1004" y="142" width="1" height="14" fill="#54ffff"/><rect x="1003" y="147" width="3" height="4" fill="#54ffff"/><rect x="1009" y="147" width="1" height="17" fill="#54ffff"/><rect x="1008" y="147" width="3" height="13" fill="#54ffff"/><rect x="1014" y="162" width="1" height="8" fill="#54ffff"/><rect x="1013" y="162" width="3" height="6" fill="#54ffff"/><rect x="1019" y="163" width="1" height="3" fill="#ff3232"/><rect x="1019" y="168" width="1" height="2" fill="#ff3232"/><rect x="1018" y="166" width="3" height="2" fill="#ff3232"/><rect x="1023" y="155" width="1" height="11" fill="#ff3232"/><rect x="1023" y="167" width="1" height="6" fill="#ff3232"/><rect x="1022" y="166" width="3" height="1" fill="#ff3232"/><rect x="1028" y="150" width="1" height="4" fill="#ff3232"/><rect x="1027.5" y="154.5" width="2" height="14" fill="none" stroke="#ff3232" stroke-width="1"/><rect x="1033" y="141" width="1" height="5" fill="#ff3232"/><rect x="1033" y="154" width="1" height="6" fill="#ff3232"/><rect x="1032.5" y="146.5" width="2" height="7" fill="none" stroke="#ff3232" stroke-width="1"/><rect x="1038" y="108" width="1" height="16" fill="#ff3232"/><rect x="1038" y="145" width="1" height="3" fill="#ff3232"/><rect x="1037.5" y="124.5" width="2" height="20" fill="none" stroke="#ff3232" stroke-width="1"/><rect x="1043" y="105" width="1" height="20" fill="#ff3232"/><rect x="1042.5" y="125.5" width="2" height="6" fill="none" stroke="#ff3232" stroke-width="1"/><rect x="1048" y="110" width="1" height="7" fill="#ff3232"/><rect x="1048" y="125" width="1" height="15" fill="#ff3232"/><rect x="1047.5" y="117.5" width="2" height="7" fill="none" stroke="#ff3232" stroke-width="1"/><rect x="1053" y="114" width="1" height="30" fill="#54ffff"/><rect x="1052" y="125" width="3" height="17" fill="#54ffff"/><rect x="1058" y="139" width="1" height="17" fill="#54ffff"/><rect x="1057" y="141" width="3" height="11" fill="#54ffff"/><rect x="1062" y="143" width="1" height="3" fill="#ff3232"/><rect x="1062" y="152" width="1" height="6" fill="#ff3232"/><rect x="1061.5" y="146.5" width="2" height="5" fill="none" stroke="#ff3232" stroke-width="1"/><rect x="1067" y="99" width="1" height="19" fill="#ff3232"/><rect x="1067" y="147" width="1" height="1" fill="#ff3232"/><rect x="1066.5" y="118.5" width="2" height="28" fill="none" stroke="#ff3232" stroke-width="1"/></g>
<g><rect x="-1.5" y="570.5" width="8" height="11" fill="none" stroke="#00ff00" stroke-width="1"/><rect x="3.5" y="576.5" width="8" height="13" fill="none" stroke="#00ff00" stroke-width="1"/><rect x="8.5" y="583.5" width="8" height="13" fill="none" stroke="#00ff00" stroke-width="1"/><rect x="12.5" y="590.5" width="8" height="12" fill="none" stroke="#00ff00" stroke-width="1"/><rect x="17.5" y="596.5" width="8" height="11" fill="none" stroke="#00ff00" stroke-width="1"/><rect x="22.5" y="602.5" width="8" height="11" fill="none" stroke="#00ff00" stroke-width="1"/><rect x="27.5" y="608.5" width="8" height="11" fill="none" stroke="#00ff00" stroke-width="1"/><rect x="32.5" y="613.5" width="8" height="10" fill="none" stroke="#00ff00" stroke-width="1"/><rect x="37.5" y="618.5" width="8" height="7" fill="none" stroke="#00ff00" stroke-width="1"/><rect x="42" y="619" width="9" height="2" fill="#00ff00"/><rect x="46" y="620" width="9" height="2" fill="#00ff00"/><rect x="51" y="621" width="9" height="2" fill="#00ff00"/><rect x="56" y="622" width="9" height="2" fill="#00ff00"/><rect x="61" y="620" width="9" height="2" fill="#ff0000"/><rect x="66" y="620" width="9" height="2" fill="#ff0000"/><rect x="71" y="619" width="9" height="2" fill="#ff0000"/><rect x="76" y="618" width="9" height="2" fill="#ff0000"/><rect x="81" y="618" width="9" height="2" fill="#ff0000"/><rect x="85" y="617" width="9" height="2" fill="#ff0000"/><rect x="90" y="618" width="9" height="2" fill="#00ff00"/><rect x="95.5" y="609.5" width="8" height="5" fill="none" stroke="#ff0000" stroke-width="1"/><rect x="100.5" y="598.5" width="8" height="11" fill="none" stroke="#ff0000" stroke-width="1"/><rect x="105.5" y="570.5" width="8" height="26" fill="none" stroke="#ff0000" stroke-width="1"/><rect x="110.5" y="544.5" width="8" height="34" fill="none" stroke="#ff0000" stroke-width="1"/><rect x="115.5" y="510.5" width="8" height="46" fill="none" stroke="#ff0000" stroke-width="1"/><rect x="119.5" y="482.5" width="8" height="49" fill="none" stroke="#ff0000" stroke-width="1"/><rect x="124.5" y="470.5" width="8" height="41" fill="none" stroke="#ff0000" stroke-width="1"/><rect x="129.5" y="458.5" width="8" height="35" fill="none" stroke="#ff0000" stroke-width="1"/><rect x="134.5" y="446.5" width="8" height="31" fill="none" stroke="#ff0000" stroke-width="1"/><rect x="139.5" y="436.5" width="8" height="27" fill="none" stroke="#ff0000" stroke-width="1"/><rect x="144.5" y="436.5" width="8" height="18" fill="none" stroke="#ff0000" stroke-width="1"/><rect x="149.5" y="448.5" width="8" height="4" fill="none" stroke="#ff0000" stroke-width="1"/><rect x="153.5" y="458.5" width="8" height="8" fill="none" stroke="#00ff00" stroke-width="1"/><rect x="158.5" y="463.5" width="8" height="11" fill="none" stroke="#00ff00" stroke-width="1"/><rect x="163.5" y="470.5" width="8" height="13" fill="none" stroke="#00ff00" stroke-width="1"/><rect x="168.5" y="478.5" width="8" height="14" fill="none" stroke="#00ff00" stroke-width="1"/><rect x="173.5" y="483.5" width="8" height="9" fill="none" stroke="#00ff00" stroke-width="1"/><rect x="178" y="483" width="9" height="2" fill="#00ff00"/><rect x="183.5" y="475.5" width="8" height="5" fill="none" stroke="#ff0000" stroke-width="1"/><rect x="188.5" y="471.5" width="8" height="5" fill="none" stroke="#ff0000" stroke-width="1"/><rect x="192.5" y="470.5" width="8" height="4" fill="none" stroke="#ff0000" stroke-width="1"/><rect x="197.5" y="467.5" width="8" height="4" fill="none" stroke="#ff0000" stroke-width="1"/><rect x="202.5" y="466.5" width="8" height="3" fill="none" stroke="#ff0000" stroke-width="1"/><rect x="207.5" y="462.5" width="8" height="5" fill="none" stroke="#ff0000" stroke-width="1"/><rect x="212.5" y="457.5" width="8" height="6" fill="none" stroke="#ff0000" stroke-width="1"/><rect x="217.5" y="456.5" width="8" height="4" fill="none" stroke="#ff0000" stroke-width="1"/><rect x="222.5" y="451.5" width="8" height="6" fill="none" stroke="#ff0000" stroke-width="1"/><rect x="226.5" y="442.5" width="8" height="10" fill="none" stroke="#ff0000" stroke-width="1"/><rect x="231.5" y="433.5" width="8" height="12" fill="none" stroke="#ff0000" stroke-width="1"/><rect x="236.5" y="422.5" width="8" height="15" fill="none" stroke="#ff0000" stroke-width="1"/><rect x="241.5" y="420.5" width="8" height="11" fill="none" stroke="#ff0000" stroke-width="1"/><rect x="246.5" y="416.5" width="8" height="10" fill="none" stroke="#ff0000" stroke-width="1"/><rect x="251.5" y="418.5" width="8" height="5" fill="none" stroke="#ff0000" stroke-width="1"/><rect x="256" y="424" width="9" height="2" fill="#ff0000"/><rect x="261.5" y="426.5" width="8" height="4" fill="none" stroke="#00ff00" stroke-width="1"/><rect x="265.5" y="430.5" width="8" height="6" fill="none" stroke="#00ff00" stroke-width="1"/><rect x="270.5" y="435.5" width="8" height="10" fill="none" stroke="#00ff00" stroke-width="1"/><rect x="275.5" y="443.5" width="8" height="14" fill="none" stroke="#00ff00" stroke-width="1"/><rect x="280.5" y="454.5" width="8" height="22" fill="none" stroke="#00ff00" stroke-width="1"/><rect x="285.5" y="465.5" width="8" height="22" fill="none" stroke="#00ff00" stroke-width="1"/><rect x="290.5" y="475.5" width="8" height="20" fill="none" stroke="#00ff00" stroke-width="1"/><rect x="295.5" y="484.5" width="8" height="17" fill="none" stroke="#00ff00" stroke-width="1"/><rect x="299.5" y="493.5" width="8" height="17" fill="none" stroke="#00ff00" stroke-width="1"/><rect x="304.5" y="502.5" width="8" height="17" fill="none" stroke="#00ff00" stroke-width="1"/><rect x="309.5" y="510.5" width="8" height="16" fill="none" stroke="#00ff00" stroke-width="1"/><rect x="314.5" y="517.5" width="8" height="13" fill="none" stroke="#00ff00" stroke-width="1"/><rect x="319.5" y="521.5" width="8" height="9" fill="none" stroke="#00ff00" stroke-width="1"/><rect x="324" y="522" width="9" height="2" fill="#00ff00"/><rect x="329" y="518" width="9" height="2" fill="#ff0000"/><rect x="333.5" y="510.5" width="8" height="6" fill="none" stroke="#ff0000" stroke-width="1"/><rect x="338.5" y="507.5" width="8" height="6" fill="none" stroke="#ff0000" stroke-width="1"/><rect x="343.5" y="508.5" width="8" height="3" fill="none" stroke="#ff0000" stroke-width="1"/><rect x="348.5" y="507.5" width="8" height="2" fill="none" stroke="#ff0000" stroke-width="1"/><rect x="353" y="510" width="9" height="2" fill="#ff0000"/><rect x="358" y="510" width="9" height="2" fill="#00ff00"/><rect x="363.5" y="511.5" width="8" height="2" fill="none" stroke="#00ff00" stroke-width="1"/><rect x="368" y="510" width="9" height="2" fill="#ff0000"/><rect x="372.5" y="506.5" width="8" height="2" fill="none" stroke="#ff0000" stroke-width="1"/><rect x="377" y="508" width="9" height="2" fill="#ff0000"/><rect x="382.5" y="512.5" width="8" height="5" fill="none" stroke="#00ff00" stroke-width="1"/><rect x="387.5" y="518.5" width="8" height="11" fill="none" stroke="#00ff00" stroke-width="1"/><rect x="392.5" y="527.5" width="8" height="18" fill="none" stroke="#00ff00" stroke-width="1"/><rect x="397.5" y="538.5" width="8" height="19" fill="none" stroke="#00ff00" stroke-width="1"/><rect x="402.5" y="550.5" width="8" height="25" fill="none" stroke="#00ff00" stroke-width="1"/><rect x="406.5" y="563.5" width="8" height="26" fill="none" stroke="#00ff00" stroke-width="1"/><rect x="411.5" y="576.5" width="8" height="25" fill="none" stroke="#00ff00" stroke-width="1"/><rect x="416.5" y="587.5" width="8" height="22" fill="none" stroke="#00ff00" stroke-width="1"/><rect x="421.5" y="595.5" width="8" height="16" fill="none" stroke="#00ff00" stroke-width="1"/><rect x="426.5" y="600.5" width="8" height="8" fill="none" stroke="#00ff00" stroke-width="1"/><rect x="431.5" y="603.5" width="8" height="7" fill="none" stroke="#00ff00" stroke-width="1"/><rect x="436.5" y="608.5" width="8" height="7" fill="none" stroke="#00ff00" stroke-width="1"/><rect x="441.5" y="612.5" width="8" height="9" fill="none" stroke="#00ff00" stroke-width="1"/><rect x="445.5" y="616.5" width="8" height="7" fill="none" stroke="#00ff00" stroke-width="1"/><rect x="450.5" y="618.5" width="8" height="3" fill="none" stroke="#00ff00" stroke-width="1"/><rect x="455.5" y="619.5" width="8" height="2" fill="none" stroke="#00ff00" stroke-width="1"/><rect x="460" y="620" width="9" height="2" fill="#00ff00"/><rect x="465" y="621" width="9" height="2" fill="#00ff00"/><rect x="470.5" y="623.5" width="8" height="3" fill="none" stroke="#00ff00" stroke-width="1"/><rect x="475" y="622" width="9" height="2" fill="#ff0000"/><rect x="479.5" y="615.5" width="8" height="4" fill="none" stroke="#ff0000" stroke-width="1"/><rect x="484.5" y="610.5" width="8" height="6" fill="none" stroke="#ff0000" stroke-width="1"/><rect x="489.5" y="604.5" width="8" height="8" fill="none" stroke="#ff0000" stroke-width="1"/><rect x="494.5" y="598.5" width="8" height="9" fill="none" stroke="#ff0000" stroke-width="1"/><rect x="499.5" y="593.5" width="8" height="9" fill="none" stroke="#ff0000" stroke-width="1"/><rect x="504.5" y="591.5" width="8" height="7" fill="none" stroke="#ff0000" stroke-width="1"/><rect x="509.5" y="591.5" width="8" height="4" fill="none" stroke="#ff0000" stroke-width="1"/><rect x="513" y="594" width="9" height="2" fill="#ff0000"/><rect x="518" y="594" width="9" height="2" fill="#ff0000"/><rect x="523" y="594" width="9" height="2" fill="#ff0000"/><rect x="528" y="592" width="9" height="2" fill="#ff0000"/><rect x="533.5" y="589.5" width="8" height="2" fill="none" stroke="#ff0000" stroke-width="1"/><rect x="538.5" y="580.5" width="8" height="7" fill="none" stroke="#ff0000" stroke-width="1"/><rect x="543.5" y="570.5" width="8" height="11" fill="none" stroke="#ff0000" stroke-width="1"/><rect x="548.5" y="557.5" width="8" height="16" fill="none" stroke="#ff0000" stroke-width="1"/><rect x="552.5" y="545.5" width="8" height="18" fill="none" stroke="#ff0000" stroke-width="1"/><rect x="557.5" y="539.5" width="8" height="16" fill="none" stroke="#ff0000" stroke-width="1"/><rect x="562.5" y="530.5" width="8" height="16" fill="none" stroke="#ff0000" stroke-width="1"/><rect x="567.5" y="528.5" width="8" height="12" fill="none" stroke="#ff0000" stroke-width="1"/><rect x="572.5" y="527.5" width="8" height="9" fill="none" stroke="#ff0000" stroke-width="1"/><rect x="577.5" y="527.5" width="8" height="5" fill="none" stroke="#ff0000" stroke-width="1"/><rect x="582.5" y="529.5" width="8" height="2" fill="none" stroke="#ff0000" stroke-width="1"/><rect x="586" y="531" width="9" height="2" fill="#ff0000"/><rect x="591" y="532" width="9" height="2" fill="#00ff00"/><rect x="596.5" y="527.5" width="8" height="3" fill="none" stroke="#ff0000" stroke-width="1"/><rect x="601.5" y="524.5" width="8" height="4" fill="none" stroke="#ff0000" stroke-width="1"/><rect x="606.5" y="530.5" width="8" height="2" fill="none" stroke="#00ff00" stroke-width="1"/><rect x="611.5" y="534.5" width="8" height="7" fill="none" stroke="#00ff00" stroke-width="1"/><rect x="616.5" y="536.5" width="8" height="2" fill="none" stroke="#00ff00" stroke-width="1"/><rect x="621.5" y="515.5" width="8" height="13" fill="none" stroke="#ff0000" stroke-width="1"/><rect x="625.5" y="495.5" width="8" height="22" fill="none" stroke="#ff0000" stroke-width="1"/><rect x="630.5" y="489.5" width="8" height="18" fill="none" stroke="#ff0000" stroke-width="1"/><rect x="635.5" y="491.5" width="8" height="11" fill="none" stroke="#ff0000" stroke-width="1"/><rect x="640.5" y="492.5" width="8" height="6" fill="none" stroke="#ff0000" stroke-width="1"/><rect x="645.5" y="489.5" width="8" height="6" fill="none" stroke="#ff0000" stroke-width="1"/><rect x="650.5" y="491.5" width="8" height="2" fill="none" stroke="#ff0000" stroke-width="1"/><rect x="655.5" y="475.5" width="8" height="12" fill="none" stroke="#ff0000" stroke-width="1"/><rect x="659.5" y="463.5" width="8" height="16" fill="none" stroke="#ff0000" stroke-width="1"/><rect x="664.5" y="453.5" width="8" height="17" fill="none" stroke="#ff0000" stroke-width="1"/><rect x="669.5" y="443.5" width="8" height="18" fill="none" stroke="#ff0000" stroke-width="1"/><rect x="674.5" y="443.5" width="8" height="11" fill="none" stroke="#ff0000" stroke-width="1"/><rect x="679.5" y="447.5" width="8" height="5" fill="none" stroke="#ff0000" stroke-width="1"/><rect x="684.5" y="440.5" width="8" height="8" fill="none" stroke="#ff0000" stroke-width="1"/><rect x="689.5" y="435.5" width="8" height="8" fill="none" stroke="#ff0000" stroke-width="1"/><rect x="693.5" y="435.5" width="8" height="5" fill="none" stroke="#ff0000" stroke-width="1"/><rect x="698" y="438" width="9" height="2" fill="#ff0000"/><rect x="703.5" y="433.5" width="8" height="4" fill="none" stroke="#ff0000" stroke-width="1"/><rect x="708.5" y="434.5" width="8" height="2" fill="none" stroke="#ff0000" stroke-width="1"/><rect x="713.5" y="439.5" width="8" height="2" fill="none" stroke="#00ff00" stroke-width="1"/><rect x="718.5" y="440.5" width="8" height="2" fill="none" stroke="#00ff00" stroke-width="1"/><rect x="723.5" y="441.5" width="8" height="2" fill="none" stroke="#00ff00" stroke-width="1"/><rect x="728.5" y="446.5" width="8" height="9" fill="none" stroke="#00ff00" stroke-width="1"/><rect x="732.5" y="450.5" width="8" height="8" fill="none" stroke="#00ff00" stroke-width="1"/><rect x="737.5" y="454.5" width="8" height="6" fill="none" stroke="#00ff00" stroke-width="1"/><rect x="742.5" y="456.5" width="8" height="5" fill="none" stroke="#00ff00" stroke-width="1"/><rect x="747.5" y="458.5" width="8" height="4" fill="none" stroke="#00ff00" stroke-width="1"/><rect x="752.5" y="461.5" width="8" height="3" fill="none" stroke="#00ff00" stroke-width="1"/><rect x="757.5" y="462.5" width="8" height="3" fill="none" stroke="#00ff00" stroke-width="1"/><rect x="762.5" y="467.5" width="8" height="8" fill="none" stroke="#00ff00" stroke-width="1"/><rect x="766.5" y="473.5" width="8" height="11" fill="none" stroke="#00ff00" stroke-width="1"/><rect x="771.5" y="479.5" width="8" height="12" fill="none" stroke="#00ff00" stroke-width="1"/><rect x="776.5" y="485.5" width="8" height="10" fill="none" stroke="#00ff00" stroke-width="1"/><rect x="781.5" y="489.5" width="8" height="6" fill="none" stroke="#00ff00" stroke-width="1"/><rect x="786.5" y="493.5" width="8" height="8" fill="none" stroke="#00ff00" stroke-width="1"/><rect x="791.5" y="498.5" width="8" height="10" fill="none" stroke="#00ff00" stroke-width="1"/><rect x="796.5" y="503.5" width="8" height="9" fill="none" stroke="#00ff00" stroke-width="1"/><rect x="801.5" y="510.5" width="8" height="14" fill="none" stroke="#00ff00" stroke-width="1"/><rect x="805.5" y="520.5" width="8" height="20" fill="none" stroke="#00ff00" stroke-width="1"/><rect x="810.5" y="531.5" width="8" height="22" fill="none" stroke="#00ff00" stroke-width="1"/><rect x="815.5" y="540.5" width="8" height="17" fill="none" stroke="#00ff00" stroke-width="1"/><rect x="820.5" y="546.5" width="8" height="11" fill="none" stroke="#00ff00" stroke-width="1"/><rect x="825.5" y="551.5" width="8" height="10" fill="none" stroke="#00ff00" stroke-width="1"/><rect x="830.5" y="557.5" width="8" height="11" fill="none" stroke="#00ff00" stroke-width="1"/><rect x="835.5" y="560.5" width="8" height="6" fill="none" stroke="#00ff00" stroke-width="1"/><rect x="839.5" y="564.5" width="8" height="7" fill="none" stroke="#00ff00" stroke-width="1"/><rect x="844.5" y="567.5" width="8" height="3" fill="none" stroke="#00ff00" stroke-width="1"/><rect x="849" y="567" width="9" height="2" fill="#00ff00"/><rect x="854" y="568" width="9" height="2" fill="#00ff00"/><rect x="859" y="569" width="9" height="2" fill="#00ff00"/><rect x="864" y="569" width="9" height="2" fill="#00ff00"/><rect x="869" y="569" width="9" height="2" fill="#00ff00"/><rect x="874" y="570" width="9" height="2" fill="#00ff00"/><rect x="878.5" y="574.5" width="8" height="8" fill="none" stroke="#00ff00" stroke-width="1"/><rect x="883.5" y="581.5" width="8" height="12" fill="none" stroke="#00ff00" stroke-width="1"/><rect x="888.5" y="588.5" width="8" height="14" fill="none" stroke="#00ff00" stroke-width="1"/><rect x="893.5" y="596.5" width="8" height="14" fill="none" stroke="#00ff00" stroke-width="1"/><rect x="898.5" y="602.5" width="8" height="13" fill="none" stroke="#00ff00" stroke-width="1"/><rect x="903.5" y="605.5" width="8" height="5" fill="none" stroke="#00ff00" stroke-width="1"/><rect x="908.5" y="600.5" width="8" height="3" fill="none" stroke="#ff0000" stroke-width="1"/><rect x="912.5" y="586.5" width="8" height="11" fill="none" stroke="#ff0000" stroke-width="1"/><rect x="917.5" y="575.5" width="8" height="14" fill="none" stroke="#ff0000" stroke-width="1"/><rect x="922.5" y="566.5" width="8" height="15" fill="none" stroke="#ff0000" stroke-width="1"/><rect x="927.5" y="556.5" width="8" height="17" fill="none" stroke="#ff0000" stroke-width="1"/><rect x="932.5" y="551.5" width="8" height="14" fill="none" stroke="#ff0000" stroke-width="1"/><rect x="937.5" y="546.5" width="8" height="13" fill="none" stroke="#ff0000" stroke-width="1"/><rect x="942.5" y="538.5" width="8" height="13" fill="none" stroke="#ff0000" stroke-width="1"/><rect x="946.5" y="536.5" width="8" height="10" fill="none" stroke="#ff0000" stroke-width="1"/><rect x="951.5" y="527.5" width="8" height="12" fill="none" stroke="#ff0000" stroke-width="1"/><rect x="956.5" y="526.5" width="8" height="8" fill="none" stroke="#ff0000" stroke-width="1"/><rect x="961.5" y="524.5" width="8" height="7" fill="none" stroke="#ff0000" stroke-width="1"/><rect x="966.5" y="535.5" width="8" height="6" fill="none" stroke="#00ff00" stroke-width="1"/><rect x="971.5" y="545.5" width="8" height="20" fill="none" stroke="#00ff00" stroke-width="1"/><rect x="976.5" y="555.5" width="8" height="18" fill="none" stroke="#00ff00" stroke-width="1"/><rect x="981.5" y="560.5" width="8" height="10" fill="none" stroke="#00ff00" stroke-width="1"/><rect x="985.5" y="537.5" width="8" height="14" fill="none" stroke="#ff0000" stroke-width="1"/><rect x="990.5" y="519.5" width="8" height="21" fill="none" stroke="#ff0000" stroke-width="1"/><rect x="995.5" y="494.5" width="8" height="31" fill="none" stroke="#ff0000" stroke-width="1"/><rect x="1000.5" y="483.5" width="8" height="28" fill="none" stroke="#ff0000" stroke-width="1"/><rect x="1005.5" y="480.5" width="8" height="20" fill="none" stroke="#ff0000" stroke-width="1"/><rect x="1010.5" y="484.5" width="8" height="11" fill="none" stroke="#ff0000" stroke-width="1"/><rect x="1015.5" y="486.5" width="8" height="5" fill="none" stroke="#ff0000" stroke-width="1"/><rect x="1019.5" y="486.5" width="8" height="3" fill="none" stroke="#ff0000" stroke-width="1"/><rect x="1024.5" y="482.5" width="8" height="4" fill="none" stroke="#ff0000" stroke-width="1"/><rect x="1029.5" y="472.5" width="8" height="9" fill="none" stroke="#ff0000" stroke-width="1"/><rect x="1034.5" y="462.5" width="8" height="13" fill="none" stroke="#ff0000" stroke-width="1"/><rect x="1039.5" y="453.5" width="8" height="14" fill="none" stroke="#ff0000" stroke-width="1"/><rect x="1044.5" y="447.5" width="8" height="13" fill="none" stroke="#ff0000" stroke-width="1"/><rect x="1049.5" y="449.5" width="8" height="7" fill="none" stroke="#ff0000" stroke-width="1"/><rect x="1054" y="458" width="9" height="2" fill="#00ff00"/><rect x="1058.5" y="460.5" width="8" height="3" fill="none" stroke="#00ff00" stroke-width="1"/><rect x="1063" y="457" width="9" height="2" fill="#ff0000"/></g>
<polyline points="2.5,580.8 7.5,594.7 12.5,605.2 16.5,615.2 21.5,618.0 26.5,619.5 31.5,623.5 36.5,626.4 41.5,622.2 46.5,612.3 50.5,613.9 55.5,616.0 60.5,616.7 65.5,614.5 70.5,612.1 75.5,606.2 80.5,603.8 85.5,604.7 89.5,605.5 94.5,603.4 99.5,583.9 104.5,546.3 109.5,514.0 114.5,495.8 119.5,475.9 123.5,454.7 128.5,450.0 133.5,445.4 138.5,432.7 143.5,424.2 148.5,433.5 153.5,452.2 157.5,472.5 162.5,485.2 167.5,495.1 172.5,500.1 177.5,498.4 182.5,484.7 187.5,474.8 192.5,474.4 196.5,478.6 201.5,483.2 206.5,492.0 211.5,489.0 216.5,487.0 221.5,494.0 226.5,476.0 230.5,455.0 235.5,440.0 240.5,431.0 245.5,432.0 250.5,423.0 255.5,431.0 260.5,440.0 265.5,450.0 269.5,462.0 274.5,476.0 279.5,496.0 284.5,514.0 289.5,524.0 294.5,529.0 299.5,533.0 303.5,545.0 308.5,558.8 313.5,567.8 318.5,575.2 323.5,576.6 328.5,564.6 333.5,556.8 337.5,547.0 342.5,537.2 347.5,520.6 352.5,510.0 357.5,507.5 362.5,507.4 367.5,507.2 372.5,492.0 376.5,480.5 381.5,483.7 386.5,506.8 391.5,524.3 396.5,540.0 401.5,550.2 406.5,567.7 410.5,584.6 415.5,596.8 420.5,606.3 425.5,605.2 430.5,597.2 435.5,605.2 440.5,613.9 445.5,620.5 449.5,622.0 454.5,618.2 459.5,615.2 464.5,613.0 469.5,616.9 474.5,616.6 479.5,601.5 483.5,587.0 488.5,571.3 493.5,557.0 498.5,546.6 503.5,542.7 508.5,540.9 513.5,539.0 517.5,537.9 522.5,534.6 527.5,524.6 532.5,509.4 537.5,490.7 542.5,473.1 547.5,458.9 552.5,446.0 556.5,442.6 561.5,450.5 566.5,457.5 571.5,483.8 576.5,503.7 581.5,515.0 586.5,528.0 590.5,542.5 595.5,559.4 600.5,562.7 605.5,571.9 610.5,588.2 615.5,599.3 620.5,588.2 625.5,528.0 629.5,508.0 634.5,507.2 639.5,504.4 644.5,501.6 649.5,498.9 654.5,501.0 659.5,474.9 663.5,461.0 668.5,449.0 673.5,443.0 678.5,449.0 683.5,455.5 688.5,444.4 693.5,435.2 697.5,438.9 702.5,446.2 707.5,431.5 712.5,439.8 717.5,459.2 722.5,462.9 727.5,457.3 732.5,482.2 736.5,488.7 741.5,483.2 746.5,487.0 751.5,492.7 756.5,489.0 761.5,500.3 766.5,522.9 770.5,538.0 775.5,543.3 780.5,546.5 785.5,536.9 790.5,534.7 795.5,544.4 800.5,548.7 805.5,560.5 809.5,576.5 814.5,587.0 819.5,583.5 824.5,579.3 829.5,575.8 834.5,578.0 839.5,566.0 843.5,555.8 848.5,542.6 853.5,544.0 858.5,548.0 863.5,544.7 868.5,540.5 873.5,532.5 878.5,539.0 882.5,562.7 887.5,576.5 892.5,589.0 897.5,598.7 902.5,601.5 907.5,591.8 912.5,571.0 916.5,553.0 921.5,541.0 926.5,536.8 931.5,525.8 936.5,514.0 941.5,493.7 946.5,479.3 950.5,490.3 955.5,476.8 960.5,465.0 965.5,468.0 970.5,502.0 975.5,542.8 980.5,547.0 985.5,522.5 989.5,505.5 994.5,480.7 999.5,471.0 1004.5,466.2 1009.5,471.0 1014.5,478.6 1019.5,482.8 1023.5,484.8 1028.5,479.3 1033.5,467.5 1038.5,458.5 1043.5,453.0 1048.5,443.6 1053.5,454.4 1058.5,463.4 1062.5,468.2 1067.5,460.0" fill="none" stroke="#ffff00" stroke-width="1" shape-rendering="crispEdges"/>
<polyline points="2.5,558.0 7.5,564.7 12.5,571.4 16.5,577.7 21.5,583.0 26.5,588.4 31.5,593.5 36.5,597.0 41.5,600.5 46.5,604.0 50.5,605.6 55.5,607.2 60.5,608.7 65.5,608.8 70.5,608.6 75.5,608.3 80.5,607.7 85.5,607.1 89.5,605.8 94.5,604.2 99.5,598.3 104.5,591.7 109.5,579.7 114.5,566.0 119.5,550.8 123.5,533.2 128.5,515.2 133.5,499.4 138.5,487.0 143.5,478.9 148.5,474.8 153.5,473.3 157.5,475.4 162.5,478.5 167.5,480.8 172.5,482.6 177.5,483.7 182.5,484.1 187.5,483.4 192.5,482.5 196.5,481.8 201.5,482.4 206.5,483.0 211.5,483.6 216.5,484.1 221.5,484.4 226.5,484.0 230.5,478.8 235.5,470.8 240.5,463.5 245.5,457.4 250.5,452.9 255.5,450.0 260.5,448.8 265.5,450.7 269.5,454.9 274.5,461.2 279.5,469.8 284.5,478.9 289.5,488.3 294.5,497.8 299.5,507.1 303.5,515.5 308.5,523.2 313.5,530.1 318.5,536.1 323.5,540.5 328.5,543.5 333.5,545.3 337.5,544.7 342.5,541.4 347.5,537.0 352.5,531.6 357.5,527.2 362.5,523.9 367.5,521.2 372.5,516.4 376.5,509.6 381.5,504.8 386.5,506.9 391.5,509.8 396.5,515.3 401.5,523.6 406.5,533.8 410.5,546.7 415.5,559.4 420.5,566.1 425.5,569.8 430.5,574.9 435.5,580.0 440.5,585.3 445.5,590.7 449.5,594.7 454.5,598.1 459.5,600.9 464.5,603.1 469.5,605.1 474.5,606.2 479.5,603.1 483.5,596.8 488.5,591.1 493.5,584.9 498.5,578.6 503.5,573.2 508.5,568.3 513.5,563.7 517.5,559.1 522.5,554.3 527.5,549.4 532.5,542.8 537.5,533.9 542.5,522.8 547.5,513.2 552.5,502.6 556.5,493.0 561.5,485.9 566.5,479.9 571.5,486.5 576.5,491.4 581.5,496.4 586.5,503.6 590.5,510.9 595.5,518.2 600.5,525.9 605.5,534.4 610.5,544.6 615.5,550.8 620.5,557.0 625.5,550.7 629.5,544.0 634.5,537.2 639.5,530.9 644.5,525.7 649.5,521.3 654.5,517.0 659.5,508.7 663.5,500.2 668.5,490.8 673.5,482.5 678.5,477.6 683.5,473.7 688.5,469.0 693.5,462.5 697.5,459.2 702.5,456.3 707.5,453.5 712.5,452.4 717.5,454.0 722.5,456.2 727.5,458.0 732.5,460.4 736.5,463.0 741.5,465.7 746.5,468.6 751.5,472.0 756.5,475.4 761.5,481.0 766.5,490.3 770.5,500.2 775.5,507.0 780.5,511.9 785.5,515.3 790.5,518.8 795.5,522.6 800.5,526.7 805.5,532.6 809.5,538.5 814.5,544.4 819.5,550.3 824.5,554.4 829.5,557.7 834.5,560.2 839.5,561.6 843.5,562.0 848.5,559.6 853.5,555.5 858.5,552.7 863.5,550.7 868.5,548.6 873.5,546.4 878.5,545.7 882.5,550.7 887.5,556.9 892.5,562.2 897.5,567.5 902.5,572.6 907.5,576.3 912.5,574.7 916.5,569.4 921.5,564.2 926.5,558.4 931.5,551.9 936.5,544.2 941.5,536.0 946.5,526.7 950.5,520.0 955.5,511.9 960.5,503.8 965.5,499.2 970.5,504.1 975.5,509.1 980.5,512.5 985.5,515.1 989.5,513.0 994.5,505.1 999.5,496.9 1004.5,492.8 1009.5,490.5 1014.5,489.2 1019.5,488.7 1023.5,488.4 1028.5,487.5 1033.5,485.0 1038.5,480.4 1043.5,475.0 1048.5,469.4 1053.5,466.6 1058.5,466.2 1062.5,466.4 1067.5,466.6" fill="none" stroke="#d8e4ff" stroke-width="1" shape-rendering="crispEdges"/>
<polyline points="2.5,553.0 7.5,558.8 12.5,565.1 16.5,571.4 21.5,577.2 26.5,582.8 31.5,588.1 36.5,592.6 41.5,596.6 46.5,600.3 50.5,602.9 55.5,605.1 60.5,606.9 65.5,607.9 70.5,608.3 75.5,608.3 80.5,608.0 85.5,607.6 89.5,606.7 94.5,605.4 99.5,601.9 104.5,596.8 109.5,588.2 114.5,577.1 119.5,564.0 123.5,548.6 128.5,531.9 133.5,515.7 138.5,501.3 143.5,490.1 148.5,482.5 153.5,477.9 157.5,476.6 162.5,477.6 167.5,479.2 172.5,480.9 177.5,482.3 182.5,483.2 187.5,483.3 192.5,482.9 196.5,482.4 201.5,482.4 206.5,482.7 211.5,483.1 216.5,483.6 221.5,484.0 226.5,484.0 230.5,481.4 235.5,476.1 240.5,469.8 245.5,463.6 250.5,458.2 255.5,454.1 260.5,451.5 265.5,451.1 269.5,453.0 274.5,457.1 279.5,463.5 284.5,471.2 289.5,479.7 294.5,488.8 299.5,498.0 303.5,506.7 308.5,514.9 313.5,522.5 318.5,529.3 323.5,534.9 328.5,539.2 333.5,542.2 337.5,543.5 342.5,542.4 347.5,539.7 352.5,535.6 357.5,531.4 362.5,527.7 367.5,524.4 372.5,520.4 376.5,515.0 381.5,509.9 386.5,508.4 391.5,509.1 396.5,512.2 401.5,517.9 406.5,525.8 410.5,536.3 415.5,547.9 420.5,557.0 425.5,563.4 430.5,569.1 435.5,574.5 440.5,579.9 445.5,585.3 449.5,590.0 454.5,594.0 459.5,597.5 464.5,600.3 469.5,602.7 474.5,604.4 479.5,603.8 483.5,600.3 488.5,595.7 493.5,590.3 498.5,584.5 503.5,578.8 508.5,573.6 513.5,568.6 517.5,563.9 522.5,559.1 527.5,554.3 532.5,548.5 537.5,541.2 542.5,532.0 547.5,522.6 552.5,512.6 556.5,502.8 561.5,494.4 566.5,487.1 571.5,486.8 576.5,489.1 581.5,492.7 586.5,498.2 590.5,504.5 595.5,511.4 600.5,518.6 605.5,526.5 610.5,535.6 615.5,543.2 620.5,550.1 625.5,550.4 629.5,547.2 634.5,542.2 639.5,536.6 644.5,531.1 649.5,526.2 654.5,521.6 659.5,515.2 663.5,507.7 668.5,499.2 673.5,490.9 678.5,484.2 683.5,479.0 688.5,474.0 693.5,468.3 697.5,463.7 702.5,460.0 707.5,456.7 712.5,454.6 717.5,454.3 722.5,455.2 727.5,456.6 732.5,458.5 736.5,460.8 741.5,463.3 746.5,465.9 751.5,469.0 756.5,472.2 761.5,476.6 766.5,483.4 770.5,491.8 775.5,499.4 780.5,505.6 785.5,510.4 790.5,514.6 795.5,518.6 800.5,522.6 805.5,527.6 809.5,533.1 814.5,538.7 819.5,544.5 824.5,549.5 829.5,553.6 834.5,556.9 839.5,559.3 843.5,560.7 848.5,560.1 853.5,557.8 858.5,555.3 863.5,553.0 868.5,550.8 873.5,548.6 878.5,547.1 882.5,548.9 887.5,552.9 892.5,557.5 897.5,562.5 902.5,567.6 907.5,571.9 912.5,573.3 916.5,571.3 921.5,567.8 926.5,563.1 931.5,557.5 936.5,550.8 941.5,543.4 946.5,535.0 950.5,527.5 955.5,519.7 960.5,511.8 965.5,505.5 970.5,504.8 975.5,506.9 980.5,509.7 985.5,512.4 989.5,512.7 994.5,508.9 999.5,502.9 1004.5,497.9 1009.5,494.2 1014.5,491.7 1019.5,490.2 1023.5,489.3 1028.5,488.4 1033.5,486.7 1038.5,483.5 1043.5,479.2 1048.5,474.3 1053.5,470.4 1058.5,468.3 1062.5,467.4 1067.5,467.0" fill="none" stroke="#dcc8ff" stroke-width="1" shape-rendering="crispEdges"/>
<polyline points="2.5,549.2 7.5,554.0 12.5,559.6 16.5,565.5 21.5,571.3 26.5,577.1 31.5,582.6 36.5,587.6 41.5,592.1 46.5,596.2 50.5,599.6 55.5,602.3 60.5,604.6 65.5,606.2 70.5,607.2 75.5,607.8 80.5,607.9 85.5,607.7 89.5,607.2 94.5,606.3 99.5,604.1 104.5,600.4 109.5,594.3 114.5,585.7 119.5,574.8 123.5,561.7 128.5,546.8 133.5,531.2 138.5,516.3 143.5,503.2 148.5,492.8 153.5,485.4 157.5,481.0 162.5,479.3 167.5,479.2 172.5,480.1 177.5,481.2 182.5,482.2 187.5,482.7 192.5,482.8 196.5,482.6 201.5,482.5 206.5,482.6 211.5,482.9 216.5,483.2 221.5,483.6 226.5,483.8 230.5,482.6 235.5,479.4 240.5,474.6 245.5,469.1 250.5,463.7 255.5,458.9 260.5,455.2 265.5,453.1 269.5,453.1 274.5,455.1 279.5,459.3 284.5,465.2 289.5,472.5 294.5,480.6 299.5,489.3 303.5,498.0 308.5,506.5 313.5,514.5 318.5,521.9 323.5,528.4 328.5,533.8 333.5,538.0 337.5,540.7 342.5,541.6 347.5,540.6 352.5,538.1 357.5,534.8 362.5,531.2 367.5,527.8 372.5,524.1 376.5,519.6 381.5,514.7 386.5,511.6 391.5,510.3 396.5,511.3 401.5,514.6 406.5,520.2 410.5,528.2 415.5,538.0 420.5,547.5 425.5,555.4 430.5,562.3 435.5,568.4 440.5,574.2 445.5,579.7 449.5,584.9 454.5,589.4 459.5,593.5 464.5,596.9 469.5,599.8 474.5,602.1 479.5,602.9 483.5,601.6 488.5,598.7 493.5,594.5 498.5,589.5 503.5,584.2 508.5,578.9 513.5,573.7 517.5,568.8 522.5,564.0 527.5,559.1 532.5,553.8 537.5,547.5 542.5,539.8 547.5,531.2 552.5,521.9 556.5,512.3 561.5,503.3 566.5,495.2 571.5,491.0 576.5,490.1 581.5,491.4 586.5,494.8 590.5,499.7 595.5,505.5 600.5,512.1 605.5,519.3 610.5,527.4 615.5,535.3 620.5,542.7 625.5,546.5 629.5,546.9 634.5,544.5 639.5,540.6 644.5,535.8 649.5,531.0 654.5,526.3 659.5,520.7 663.5,514.2 668.5,506.7 673.5,498.8 678.5,491.5 683.5,485.2 688.5,479.6 693.5,473.9 697.5,468.8 702.5,464.4 707.5,460.6 712.5,457.6 717.5,455.9 722.5,455.6 727.5,456.1 732.5,457.3 736.5,459.0 741.5,461.1 746.5,463.5 751.5,466.3 756.5,469.2 761.5,472.9 766.5,478.2 770.5,485.0 775.5,492.2 780.5,498.9 785.5,504.7 790.5,509.6 795.5,514.1 800.5,518.4 805.5,523.0 809.5,528.0 814.5,533.4 819.5,539.0 824.5,544.2 829.5,548.9 834.5,552.9 839.5,556.1 843.5,558.4 848.5,559.2 853.5,558.5 858.5,556.9 863.5,554.9 868.5,552.9 873.5,550.7 878.5,548.9 882.5,548.9 887.5,550.9 892.5,554.2 897.5,558.4 902.5,563.0 907.5,567.4 912.5,570.4 916.5,570.9 921.5,569.3 926.5,566.2 931.5,561.8 936.5,556.3 941.5,549.9 946.5,542.5 950.5,535.0 955.5,527.4 960.5,519.6 965.5,512.5 970.5,508.7 975.5,507.8 980.5,508.8 985.5,510.6 989.5,511.6 994.5,510.3 999.5,506.6 1004.5,502.2 1009.5,498.2 1014.5,494.9 1019.5,492.6 1023.5,491.0 1028.5,489.7 1033.5,488.2 1038.5,485.9 1043.5,482.6 1048.5,478.4 1053.5,474.4 1058.5,471.4 1062.5,469.4 1067.5,468.2" fill="none" stroke="#e0a8ff" stroke-width="1" shape-rendering="crispEdges"/>
<polyline points="2.5,546.2 7.5,550.1 12.5,554.8 16.5,560.2 21.5,565.7 26.5,571.4 31.5,577.0 36.5,582.3 41.5,587.2 46.5,591.7 50.5,595.6 55.5,599.0 60.5,601.8 65.5,604.0 70.5,605.6 75.5,606.7 80.5,607.3 85.5,607.5 89.5,607.4 94.5,606.8 99.5,605.5 104.5,602.9 109.5,598.6 114.5,592.2 119.5,583.5 123.5,572.6 128.5,559.7 133.5,545.5 138.5,530.9 143.5,517.0 148.5,504.9 153.5,495.1 157.5,488.1 162.5,483.7 167.5,481.4 172.5,480.8 177.5,481.0 182.5,481.6 187.5,482.2 192.5,482.5 196.5,482.5 201.5,482.5 206.5,482.6 211.5,482.7 216.5,483.0 221.5,483.3 226.5,483.6 230.5,483.1 235.5,481.2 240.5,477.9 245.5,473.5 250.5,468.6 255.5,463.7 260.5,459.5 265.5,456.3 269.5,454.7 274.5,454.9 279.5,457.1 284.5,461.1 289.5,466.8 294.5,473.7 299.5,481.5 303.5,489.8 308.5,498.1 313.5,506.3 318.5,514.1 323.5,521.2 328.5,527.5 333.5,532.8 337.5,536.7 342.5,539.2 347.5,539.9 352.5,539.0 357.5,536.9 362.5,534.1 367.5,530.9 372.5,527.5 376.5,523.6 381.5,519.1 386.5,515.4 391.5,512.8 396.5,512.1 401.5,513.3 406.5,516.8 410.5,522.5 415.5,530.3 420.5,538.9 425.5,547.2 430.5,554.7 435.5,561.6 440.5,567.9 445.5,573.8 449.5,579.3 454.5,584.4 459.5,588.9 464.5,592.9 469.5,596.3 474.5,599.2 479.5,601.1 483.5,601.4 488.5,600.0 493.5,597.3 498.5,593.4 503.5,588.8 508.5,583.8 513.5,578.8 517.5,573.8 522.5,568.9 527.5,564.0 532.5,558.9 537.5,553.2 542.5,546.5 547.5,538.8 552.5,530.4 556.5,521.3 561.5,512.3 566.5,503.8 571.5,497.4 576.5,493.7 581.5,492.6 586.5,493.7 590.5,496.7 595.5,501.1 600.5,506.6 605.5,512.9 610.5,520.2 615.5,527.8 620.5,535.2 625.5,540.9 629.5,543.9 634.5,544.2 639.5,542.4 644.5,539.1 649.5,535.1 654.5,530.7 659.5,525.7 663.5,520.0 668.5,513.3 673.5,506.1 678.5,498.8 683.5,492.0 688.5,485.8 693.5,479.9 697.5,474.4 702.5,469.4 707.5,465.0 712.5,461.3 717.5,458.6 722.5,457.1 727.5,456.6 732.5,456.9 736.5,458.0 741.5,459.6 746.5,461.6 751.5,463.9 756.5,466.6 761.5,469.7 766.5,474.0 770.5,479.5 775.5,485.8 780.5,492.4 785.5,498.5 790.5,504.1 795.5,509.1 800.5,513.7 805.5,518.4 809.5,523.2 814.5,528.3 819.5,533.6 824.5,538.9 829.5,543.9 834.5,548.4 839.5,552.2 843.5,555.3 848.5,557.3 853.5,557.9 858.5,557.4 863.5,556.2 868.5,554.5 873.5,552.6 878.5,550.8 882.5,549.8 887.5,550.4 892.5,552.3 897.5,555.3 902.5,559.1 907.5,563.3 912.5,566.8 916.5,568.8 921.5,569.1 926.5,567.6 931.5,564.7 936.5,560.5 941.5,555.2 946.5,548.8 950.5,541.9 955.5,534.6 960.5,527.1 965.5,519.8 970.5,514.2 975.5,511.0 980.5,509.9 985.5,510.2 989.5,510.9 994.5,510.6 999.5,508.6 1004.5,505.4 1009.5,501.8 1014.5,498.4 1019.5,495.5 1023.5,493.2 1028.5,491.5 1033.5,489.8 1038.5,487.8 1043.5,485.2 1048.5,481.8 1053.5,478.1 1058.5,474.8 1062.5,472.1 1067.5,470.1" fill="none" stroke="#e070ff" stroke-width="1" shape-rendering="crispEdges"/>
<polyline points="2.5,544.2 7.5,547.2 12.5,551.0 16.5,555.6 21.5,560.7 26.5,566.0 31.5,571.5 36.5,576.9 41.5,582.0 46.5,586.9 50.5,591.2 55.5,595.1 60.5,598.4 65.5,601.2 70.5,603.4 75.5,605.1 80.5,606.2 85.5,606.8 89.5,607.1 94.5,607.0 99.5,606.2 104.5,604.6 109.5,601.6 114.5,596.9 119.5,590.2 123.5,581.4 128.5,570.6 133.5,558.0 138.5,544.4 143.5,530.7 148.5,517.8 153.5,506.5 157.5,497.3 162.5,490.5 167.5,486.0 172.5,483.4 177.5,482.2 182.5,481.9 187.5,482.0 192.5,482.3 196.5,482.4 201.5,482.5 206.5,482.5 211.5,482.6 216.5,482.8 221.5,483.1 226.5,483.3 230.5,483.2 235.5,482.2 240.5,480.0 245.5,476.8 250.5,472.7 255.5,468.2 260.5,463.8 265.5,460.1 269.5,457.4 274.5,456.1 279.5,456.6 284.5,458.9 289.5,462.8 294.5,468.3 299.5,474.9 303.5,482.3 308.5,490.2 313.5,498.3 318.5,506.2 323.5,513.7 328.5,520.6 333.5,526.7 337.5,531.7 342.5,535.4 347.5,537.7 352.5,538.3 357.5,537.6 362.5,535.8 367.5,533.4 372.5,530.5 376.5,527.0 381.5,523.1 386.5,519.2 391.5,516.0 396.5,514.0 401.5,513.7 406.5,515.2 410.5,518.9 415.5,524.6 420.5,531.7 425.5,539.4 430.5,547.1 435.5,554.3 440.5,561.1 445.5,567.4 449.5,573.4 454.5,578.9 459.5,583.9 464.5,588.4 469.5,592.4 474.5,595.8 479.5,598.4 483.5,599.9 488.5,600.0 493.5,598.6 498.5,596.0 503.5,592.4 508.5,588.1 513.5,583.4 517.5,578.6 522.5,573.7 527.5,568.9 532.5,563.9 537.5,558.5 542.5,552.5 547.5,545.7 552.5,538.0 556.5,529.7 561.5,521.0 566.5,512.4 571.5,504.9 576.5,499.3 581.5,495.9 586.5,494.8 590.5,495.7 595.5,498.4 600.5,502.5 605.5,507.7 610.5,514.0 615.5,520.9 620.5,528.0 625.5,534.5 629.5,539.2 634.5,541.7 639.5,542.0 644.5,540.6 649.5,537.8 654.5,534.3 659.5,530.0 663.5,525.0 668.5,519.2 673.5,512.6 678.5,505.7 683.5,498.9 688.5,492.3 693.5,486.1 697.5,480.2 702.5,474.8 707.5,469.9 712.5,465.6 717.5,462.1 722.5,459.6 727.5,458.1 732.5,457.5 736.5,457.8 741.5,458.7 746.5,460.1 751.5,462.0 756.5,464.3 761.5,467.0 766.5,470.5 770.5,475.0 775.5,480.4 780.5,486.4 785.5,492.5 790.5,498.3 795.5,503.7 800.5,508.7 805.5,513.5 809.5,518.4 814.5,523.3 819.5,528.5 824.5,533.7 829.5,538.8 834.5,543.6 839.5,547.9 843.5,551.6 848.5,554.4 853.5,556.2 858.5,556.8 863.5,556.5 868.5,555.5 873.5,554.1 878.5,552.4 882.5,551.1 887.5,550.8 892.5,551.5 897.5,553.4 902.5,556.3 907.5,559.8 912.5,563.3 916.5,566.1 921.5,567.6 926.5,567.6 931.5,566.2 936.5,563.4 941.5,559.3 946.5,554.1 950.5,548.0 955.5,541.3 960.5,534.2 965.5,527.0 970.5,520.6 975.5,515.8 980.5,512.9 985.5,511.5 989.5,511.2 994.5,510.9 999.5,509.8 1004.5,507.6 1009.5,504.7 1014.5,501.5 1019.5,498.5 1023.5,495.9 1028.5,493.7 1033.5,491.7 1038.5,489.8 1043.5,487.5 1048.5,484.7 1053.5,481.4 1058.5,478.1 1062.5,475.1 1067.5,472.6" fill="none" stroke="#dc40ff" stroke-width="1" shape-rendering="crispEdges"/>
<polyline points="2.5,542.3 7.5,544.7 12.5,547.9 16.5,551.7 21.5,556.2 26.5,561.1 31.5,566.3 36.5,571.6 41.5,576.8 46.5,581.8 50.5,586.5 55.5,590.8 60.5,594.6 65.5,597.9 70.5,600.7 75.5,602.9 80.5,604.5 85.5,605.7 89.5,606.4 94.5,606.7 99.5,606.5 104.5,605.5 109.5,603.6 114.5,600.2 119.5,595.2 123.5,588.3 128.5,579.4 133.5,568.7 138.5,556.6 143.5,543.7 148.5,530.7 153.5,518.6 157.5,507.9 162.5,499.2 167.5,492.6 172.5,488.0 177.5,485.1 182.5,483.5 187.5,482.7 192.5,482.5 196.5,482.4 201.5,482.5 206.5,482.5 211.5,482.5 216.5,482.7 221.5,482.9 226.5,483.1 230.5,483.1 235.5,482.7 240.5,481.4 245.5,479.1 250.5,475.9 255.5,472.0 260.5,467.9 265.5,464.0 269.5,460.7 274.5,458.4 279.5,457.5 284.5,458.2 289.5,460.5 294.5,464.4 299.5,469.6 303.5,476.0 308.5,483.1 313.5,490.7 318.5,498.4 323.5,506.1 328.5,513.3 333.5,520.0 337.5,525.9 342.5,530.7 347.5,534.2 352.5,536.3 357.5,536.9 362.5,536.4 367.5,534.9 372.5,532.7 376.5,529.8 381.5,526.5 386.5,522.8 391.5,519.4 396.5,516.7 401.5,515.2 406.5,515.2 410.5,517.0 415.5,520.8 420.5,526.3 425.5,532.9 430.5,540.0 435.5,547.1 440.5,554.1 445.5,560.8 449.5,567.1 454.5,573.0 459.5,578.4 464.5,583.4 469.5,587.9 474.5,591.9 479.5,595.2 483.5,597.5 488.5,598.7 493.5,598.7 498.5,597.3 503.5,594.9 508.5,591.5 513.5,587.5 517.5,583.0 522.5,578.4 527.5,573.6 532.5,568.8 537.5,563.7 542.5,558.1 547.5,551.9 552.5,545.0 556.5,537.3 561.5,529.2 566.5,520.8 571.5,512.8 576.5,506.1 581.5,501.0 586.5,497.9 590.5,496.8 595.5,497.6 600.5,500.1 605.5,503.9 610.5,508.9 615.5,514.9 620.5,521.5 625.5,528.0 629.5,533.6 634.5,537.6 639.5,539.8 644.5,540.2 649.5,539.0 654.5,536.6 659.5,533.3 663.5,529.1 668.5,524.2 673.5,518.4 678.5,512.0 683.5,505.5 688.5,498.9 693.5,492.5 697.5,486.4 702.5,480.6 707.5,475.2 712.5,470.4 717.5,466.3 722.5,462.9 727.5,460.5 732.5,459.0 736.5,458.4 741.5,458.5 746.5,459.3 751.5,460.7 756.5,462.5 761.5,464.7 766.5,467.6 770.5,471.3 775.5,475.9 780.5,481.1 785.5,486.8 790.5,492.5 795.5,498.1 800.5,503.4 805.5,508.5 809.5,513.4 814.5,518.4 819.5,523.4 824.5,528.6 829.5,533.7 834.5,538.6 839.5,543.3 843.5,547.5 848.5,550.9 853.5,553.6 858.5,555.2 863.5,555.8 868.5,555.7 873.5,554.9 878.5,553.6 882.5,552.4 887.5,551.6 892.5,551.5 897.5,552.5 902.5,554.4 907.5,557.1 912.5,560.2 916.5,563.1 921.5,565.4 926.5,566.5 931.5,566.3 936.5,564.8 941.5,562.1 946.5,558.1 950.5,553.0 955.5,547.2 960.5,540.7 965.5,533.8 970.5,527.2 975.5,521.5 980.5,517.2 985.5,514.4 989.5,512.8 994.5,511.9 999.5,510.8 1004.5,509.2 1009.5,506.9 1014.5,504.2 1019.5,501.4 1023.5,498.6 1028.5,496.1 1033.5,493.9 1038.5,491.9 1043.5,489.7 1048.5,487.2 1053.5,484.3 1058.5,481.2 1062.5,478.1 1067.5,475.4" fill="none" stroke="#cc20f0" stroke-width="1" shape-rendering="crispEdges"/>
<rect x="225" y="438" width="3" height="135" fill="#ff00ff"/>
<rect x="847" y="438" width="3" height="135" fill="#ff00ff"/>
<rect x="988" y="438" width="3" height="135" fill="#ff00ff"/>
</svg>
<div class="hl" style="left:0;top:19px;width:1122px"></div>
<div class="vl" style="left:0;top:0;height:19px"></div>
<div class="vl" style="left:23px;top:0;height:19px"></div>
<svg class="a" style="left:4px;top:3px" width="14" height="12" viewBox="0 0 14 12"><rect x="1" y="1" width="11.5" height="10" rx="2" fill="none" stroke="#808080" stroke-width="1.2"/><rect x="7.5" y="3" width="3.5" height="6.5" fill="#808080"/></svg>
<div class="t" style="left:28px;color:#c0c0c0">分时</div>
<div class="t" style="left:61px;color:#c0c0c0">1分钟</div>
<div class="t" style="left:100px;color:#c0c0c0">5分钟</div>
<div class="t" style="left:140px;color:#c0c0c0">15分钟</div>
<div class="t" style="left:185px;color:#c0c0c0">30分钟</div>
<div class="t" style="left:231px;color:#c0c0c0">60分钟</div>
<div class="t" style="left:278px;color:#00ffff">日线</div>
<div class="t" style="left:311px;color:#c0c0c0">周线</div>
<div class="t" style="left:345px;color:#c0c0c0">月线</div>
<div class="t" style="left:378px;color:#c0c0c0">多周期</div>
<div class="t" style="left:422px;color:#c0c0c0">更多<span style="margin-left:2px">&gt;</span></div>
<div class="vl" style="left:806px;top:0;height:19px"></div>
<div class="vl" style="left:839px;top:0;height:19px"></div>
<div class="vl" style="left:874px;top:0;height:19px"></div>
<div class="vl" style="left:909px;top:0;height:19px"></div>
<div class="vl" style="left:944px;top:0;height:19px"></div>
<div class="vl" style="left:979px;top:0;height:19px"></div>
<div class="vl" style="left:1014px;top:0;height:19px"></div>
<div class="vl" style="left:1049px;top:0;height:19px"></div>
<div class="vl" style="left:1084px;top:0;height:19px"></div>
<div class="vl" style="left:1121px;top:0;height:19px"></div>
<div class="t" style="left:811px">复权</div>
<div class="t" style="left:845px">叠加</div>
<div class="t" style="left:880px">多股</div>
<div class="t" style="left:915px">统计</div>
<div class="t" style="left:949px">画线</div>
<div class="t" style="left:987px">F10</div>
<div class="t" style="left:1019px">标记</div>
<div class="t" style="left:1052px">+自选</div>
<div class="t" style="left:1090px">返回</div>
<div class="a" style="left:3px;top:22px;">新力金融(日线.前复权)</div>
<svg class="a" style="left:127px;top:22px" width="14" height="14" viewBox="0 0 14 14"><circle cx="7" cy="7" r="6" fill="#808080"/><path d="M3.8 5.6 L7 8.8 L10.2 5.6" fill="none" stroke="#000" stroke-width="1.4"/></svg>
<svg class="a" style="left:1036px;top:23px" width="34" height="14" viewBox="0 0 34 14"><path d="M6.5 1.5 L11.5 6.5 L6.5 11.5 L1.5 6.5 Z" fill="none" stroke="#808080" stroke-width="1"/><rect x="19.5" y="1.5" width="11" height="10" rx="2" fill="none" stroke="#808080" stroke-width="1.2"/><rect x="26" y="3.2" width="3.3" height="6.8" fill="#808080"/></svg>
<div class="vl" style="left:1070px;top:20px;height:377px"></div>
<div class="vl" style="left:1070px;top:397px;height:234px;width:2px"></div>
<div class="vl" style="left:1121px;top:20px;height:377px"></div>
<div class="vl" style="left:1121px;top:397px;height:253px;width:2px"></div>
<div class="hl" style="left:0;top:396px;width:1122px"></div>
<div class="pl" style="top:43px">12.00</div>
<div class="pl" style="top:90px">11.00</div>
<div class="pl" style="top:138px">10.00</div>
<div class="pl" style="top:185px">9.00</div>
<div class="pl" style="top:281px">7.00</div>
<div class="pl" style="top:328px">6.00</div>
<div class="pl" style="top:376px">5.00</div>
<div class="hl" style="left:1071px;top:49px;width:5px"></div>
<div class="hl" style="left:1071px;top:96px;width:5px"></div>
<div class="hl" style="left:1071px;top:144px;width:5px"></div>
<div class="hl" style="left:1071px;top:191px;width:5px"></div>
<div class="hl" style="left:1071px;top:239px;width:5px"></div>
<div class="hl" style="left:1071px;top:287px;width:5px"></div>
<div class="hl" style="left:1071px;top:334px;width:5px"></div>
<div class="hl" style="left:1071px;top:382px;width:5px"></div>
<div class="hl" style="left:1071px;top:73px;width:2px"></div>
<div class="hl" style="left:1071px;top:120px;width:2px"></div>
<div class="hl" style="left:1071px;top:168px;width:2px"></div>
<div class="hl" style="left:1071px;top:215px;width:2px"></div>
<div class="hl" style="left:1071px;top:263px;width:2px"></div>
<div class="hl" style="left:1071px;top:311px;width:2px"></div>
<div class="hl" style="left:1071px;top:358px;width:2px"></div>
<div class="a" style="left:1071px;top:227px;width:50px;height:15px;background:#000080;border-top:1px solid #c00000;border-bottom:1px solid #c00000;color:#e8e8d8;line-height:15px;"><span style="padding-left:1px">7.92</span></div>
<div class="pl" style="top:406px">90.00</div>
<div class="pl" style="top:446px">75.00</div>
<div class="pl" style="top:486px">60.00</div>
<div class="pl" style="top:526px">45.00</div>
<div class="pl" style="top:566px">30.00</div>
<div class="hl" style="left:1072px;top:412px;width:4px"></div>
<div class="hl" style="left:1072px;top:452px;width:4px"></div>
<div class="hl" style="left:1072px;top:492px;width:4px"></div>
<div class="hl" style="left:1072px;top:532px;width:4px"></div>
<div class="hl" style="left:1072px;top:572px;width:4px"></div>
<div class="hl" style="left:1072px;top:612px;width:4px"></div>
<div class="hl" style="left:1072px;top:432px;width:2px"></div>
<div class="hl" style="left:1072px;top:472px;width:2px"></div>
<div class="hl" style="left:1072px;top:512px;width:2px"></div>
<div class="hl" style="left:1072px;top:552px;width:2px"></div>
<div class="hl" style="left:1072px;top:592px;width:2px"></div>
<svg class="a" style="left:1px;top:398px" width="14" height="14" viewBox="0 0 14 14"><circle cx="7" cy="7" r="6" fill="#808080"/><path d="M3.8 5.6 L7 8.8 L10.2 5.6" fill="none" stroke="#000" stroke-width="1.4"/></svg>
<div class="a" style="left:18px;top:398px;color:#c0c0c0">股朋指标网</div>
<div class="a" style="left:83px;top:398px;color:#ffff00">AA: 72.45</div>
<div class="a" style="left:139px;top:398px;color:#d8e4ff">A1: 69.79</div>
<div class="a" style="left:195px;top:398px;color:#dcc8ff">A2: 69.46</div>
<div class="a" style="left:251px;top:398px;color:#e0a8ff">A3: 69.03</div>
<div class="a" style="left:307px;top:398px;color:#e070ff">A4: 68.38</div>
<div class="a" style="left:363px;top:398px;color:#dc40ff">A5: 67.53</div>
<div class="a" style="left:419px;top:398px;color:#cc20f0">A6: 66.54</div>
<div class="a" style="left:475px;top:398px;color:#c020e0">A: 67.53</div>
<div class="lab" style="left:109px;top:567px;color:#dcffff">拉</div>
<div class="lab" style="left:114px;top:567px;color:#dcffff">拉</div>
<div class="lab" style="left:119px;top:567px;color:#dcffff">拉</div>
<div class="lab" style="left:124px;top:567px;color:#dcffff">拉</div>
<div class="lab" style="left:129px;top:567px;color:#dcffff">拉</div>
<div class="lab" style="left:139px;top:567px;color:#dcffff">拉</div>
<div class="lab" style="left:372px;top:567px;color:#dcffff">拉</div>
<div class="lab" style="left:479px;top:567px;color:#dcffff">拉</div>
<div class="lab" style="left:624px;top:567px;color:#dcffff">拉</div>
<div class="lab" style="left:659px;top:567px;color:#dcffff">拉</div>
<div class="lab" style="left:848px;top:567px;color:#dcffff">拉</div>
<div class="lab" style="left:990px;top:567px;color:#dcffff">拉</div>
<div class="lab" style="left:82px;top:601px;color:#ff0000"><span style="font-size:10px;margin-right:-1.5px">☆</span>发财了</div>
<div class="lab" style="left:485px;top:595px;color:#ff0000"><span style="font-size:10px;margin-right:-1.5px">☆</span>发财了</div>
<div class="lab" style="left:625px;top:581px;color:#ff0000"><span style="font-size:10px;margin-right:-1.5px">☆</span>发财了</div>
<div class="lab" style="left:850px;top:557px;color:#ff0000"><span style="font-size:10px;margin-right:-1.5px">☆</span>发财了</div>
<div class="lab" style="left:917px;top:568px;color:#ff0000"><span style="font-size:10px;margin-right:-1.5px">☆</span>发财了</div>
<div class="lab" style="left:431px;top:619px;color:#00ff00"><span style="font-size:10px;margin-right:-1.5px">☆</span>大底</div>
<div class="lab" style="left:484px;top:619px;color:#00ff00"><span style="font-size:10px;margin-right:-1.5px">☆</span>大底</div>
<div class="lab" style="left:621px;top:619px;color:#00ff00"><span style="font-size:10px;margin-right:-1.5px">☆</span>大底</div>
<div class="hl" style="left:0;top:630px;width:1122px"></div>
<div class="hl" style="left:0;top:646px;width:1122px"></div>
<div class="mo" style="left:3px">2024年</div>
<div class="vl" style="left:50px;top:631px;height:15px"></div>
<div class="mo" style="left:52px">9</div>
<div class="vl" style="left:143px;top:631px;height:15px"></div>
<div class="mo" style="left:145px">10</div>
<div class="vl" style="left:230px;top:631px;height:15px"></div>
<div class="mo" style="left:232px">11</div>
<div class="vl" style="left:332px;top:631px;height:15px"></div>
<div class="mo" style="left:334px">12</div>
<div class="vl" style="left:439px;top:631px;height:15px"></div>
<div class="mo" style="left:441px">1</div>
<div class="vl" style="left:526px;top:631px;height:15px"></div>
<div class="mo" style="left:528px">2</div>
<div class="vl" style="left:614px;top:631px;height:15px"></div>
<div class="mo" style="left:616px">3</div>
<div class="vl" style="left:716px;top:631px;height:15px"></div>
<div class="mo" style="left:718px">4</div>
<div class="vl" style="left:818px;top:631px;height:15px"></div>
<div class="mo" style="left:820px">5</div>
<div class="vl" style="left:73px;top:631px;height:3px"></div>
<div class="vl" style="left:96px;top:631px;height:3px"></div>
<div class="vl" style="left:120px;top:631px;height:3px"></div>
<div class="vl" style="left:165px;top:631px;height:3px"></div>
<div class="vl" style="left:187px;top:631px;height:3px"></div>
<div class="vl" style="left:208px;top:631px;height:3px"></div>
<div class="vl" style="left:256px;top:631px;height:3px"></div>
<div class="vl" style="left:281px;top:631px;height:3px"></div>
<div class="vl" style="left:307px;top:631px;height:3px"></div>
<div class="vl" style="left:359px;top:631px;height:3px"></div>
<div class="vl" style="left:386px;top:631px;height:3px"></div>
<div class="vl" style="left:412px;top:631px;height:3px"></div>
<div class="vl" style="left:461px;top:631px;height:3px"></div>
<div class="vl" style="left:483px;top:631px;height:3px"></div>
<div class="vl" style="left:505px;top:631px;height:3px"></div>
<div class="vl" style="left:548px;top:631px;height:3px"></div>
<div class="vl" style="left:570px;top:631px;height:3px"></div>
<div class="vl" style="left:593px;top:631px;height:3px"></div>
<div class="vl" style="left:640px;top:631px;height:3px"></div>
<div class="vl" style="left:665px;top:631px;height:3px"></div>
<div class="vl" style="left:691px;top:631px;height:3px"></div>
<div class="vl" style="left:742px;top:631px;height:3px"></div>
<div class="vl" style="left:767px;top:631px;height:3px"></div>
<div class="vl" style="left:794px;top:631px;height:3px"></div>
<div class="vl" style="left:841px;top:631px;height:3px"></div>
<div class="vl" style="left:864px;top:631px;height:3px"></div>
<div class="vl" style="left:959px;top:631px;height:3px"></div>
<div class="vl" style="left:43px;top:647px;height:3px"></div>
<div class="vl" style="left:73px;top:647px;height:3px"></div>
<div class="vl" style="left:115px;top:647px;height:3px"></div>
<div class="vl" style="left:145px;top:647px;height:3px"></div>
<div class="vl" style="left:177px;top:647px;height:3px"></div>
<div class="vl" style="left:207px;top:647px;height:3px"></div>
<div class="vl" style="left:241px;top:647px;height:3px"></div>
<div class="vl" style="left:282px;top:647px;height:3px"></div>
<div class="vl" style="left:308px;top:647px;height:3px"></div>
<div class="vl" style="left:332px;top:647px;height:3px"></div>
<div class="vl" style="left:364px;top:647px;height:3px"></div>
<div class="vl" style="left:391px;top:647px;height:3px"></div>
<div class="vl" style="left:423px;top:647px;height:3px"></div>
<div class="vl" style="left:480px;top:647px;height:3px"></div>
<div class="vl" style="left:508px;top:647px;height:3px"></div>
<div class="vl" style="left:537px;top:647px;height:3px"></div>
<div class="vl" style="left:568px;top:647px;height:3px"></div>
<div class="vl" style="left:628px;top:647px;height:3px"></div>
<div class="vl" style="left:663px;top:647px;height:3px"></div>
<div class="vl" style="left:696px;top:647px;height:3px"></div>
<div class="vl" style="left:735px;top:647px;height:3px"></div>
<div class="vl" style="left:766px;top:647px;height:3px"></div>
<div class="vl" style="left:807px;top:647px;height:3px"></div>
<div class="vl" style="left:840px;top:647px;height:3px"></div>
<div class="vl" style="left:870px;top:647px;height:3px"></div>
<div style="position:absolute;left:8px;top:648px;width:1px;height:2px;background:#e0e0e0"></div>
<div style="position:absolute;left:11px;top:648px;width:1px;height:2px;background:#e0e0e0"></div>
<div style="position:absolute;left:16px;top:648px;width:1px;height:2px;background:#e0e0e0"></div>
<div style="position:absolute;left:19px;top:648px;width:1px;height:2px;background:#e0e0e0"></div>
<div style="position:absolute;left:51px;top:648px;width:1px;height:2px;background:#e0e0e0"></div>
<div style="position:absolute;left:828px;top:648px;width:1px;height:2px;background:#e0e0e0"></div>
<div style="position:absolute;left:845px;top:648px;width:4px;height:2px;background:#54ffff"></div>
<div style="position:absolute;left:855px;top:648px;width:11px;height:2px;background:#54ffff"></div>
<div class="vl" style="left:0;top:647px;height:3px"></div>
<div class="a" style="left:870px;top:631px;width:77px;height:15px;background:#000080;color:#e8e8d8;line-height:15px;"><span style="padding-left:2px">2025/05/20/二</span></div>
<div class="hl" style="left:1122px;top:25px;width:8px"></div>
<div class="hl" style="left:1122px;top:45px;width:8px"></div>
<div class="hl" style="left:1122px;top:142px;width:8px"></div>
<div class="hl" style="left:1122px;top:239px;width:8px"></div>
<div class="hl" style="left:1122px;top:336px;width:8px"></div>
<div class="hl" style="left:1122px;top:418px;width:8px"></div>
<div class="hl" style="left:1122px;top:437px;width:8px"></div>
<div class="rp" style="top:26px">委</div>
<div class="rp" style="top:48px">卖</div>
<div class="rp" style="top:67px">卖</div>
<div class="rp" style="top:86px">卖</div>
<div class="rp" style="top:105px">卖</div>
<div class="rp" style="top:124px">卖</div>
<div class="rp" style="top:144px">买</div>
<div class="rp" style="top:164px">买</div>
<div class="rp" style="top:183px">买</div>
<div class="rp" style="top:203px">买</div>
<div class="rp" style="top:222px">买</div>
<div class="rp" style="top:242px">现</div>
<div class="rp" style="top:262px">涨</div>
<div class="rp" style="top:281px">涨</div>
<div class="rp" style="top:300px">总</div>
<div class="rp" style="top:319px">外</div>
<div class="rp" style="top:338px">换</div>
<div class="rp" style="top:358px">净</div>
<div class="rp" style="top:377px">收</div>
<div class="rp" style="top:400px;color:#ffff00">自</div>
<div class="rp" style="top:420px;color:#e0e0e0">交</div>
<div class="rp" style="top:438px;color:#e0e0e0;left:1124px;font-size:12px">1</div>
<div class="rp" style="top:456px;color:#e0e0e0;left:1124px;font-size:12px">1</div>
<div class="rp" style="top:474px;color:#e0e0e0;left:1124px;font-size:12px">1</div>
<div class="rp" style="top:492px;color:#e0e0e0;left:1124px;font-size:12px">1</div>
<div class="rp" style="top:510px;color:#e0e0e0;left:1124px;font-size:12px">1</div>
<div class="rp" style="top:528px;color:#e0e0e0;left:1124px;font-size:12px">1</div>
<div class="rp" style="top:546px;color:#e0e0e0;left:1124px;font-size:12px">1</div>
<div class="rp" style="top:563px;color:#e0e0e0;left:1124px;font-size:12px">1</div>
<div class="rp" style="top:581px;color:#e0e0e0;left:1124px;font-size:12px">1</div>
<div class="a" style="left:984px;top:600px;width:146px;height:50px;background:#000"></div>
<div class="a" style="left:1018px;top:604px;font-size:18px;line-height:22px;font-weight:bold;color:#f4f4f4;letter-spacing:0.1px">股朋指标网</div>
<div class="a" style="left:991px;top:624px;font-size:17px;line-height:22px;font-weight:bold;color:#f0f0f0;letter-spacing:0.1px">www.7gpzb.com</div>
</body></html>
